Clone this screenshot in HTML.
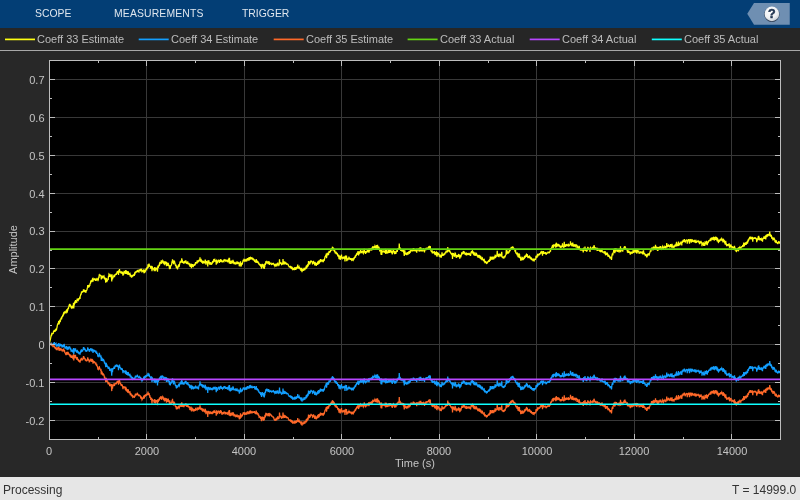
<!DOCTYPE html>
<html><head><meta charset="utf-8"><style>
*{-webkit-font-smoothing:antialiased;}
html,body{margin:0;padding:0;width:800px;height:500px;overflow:hidden;background:#282828;font-family:"Liberation Sans",sans-serif;}
.abs{position:absolute;white-space:nowrap;}
div{white-space:nowrap;will-change:transform;}
#top{position:absolute;left:0;top:0;width:800px;height:28px;background:#033e75;}
.tab{position:absolute;top:8px;color:#dfe6ee;font-size:10.4px;line-height:12px;}
#legend{position:absolute;left:0;top:28px;width:800px;height:22px;background:#262626;}
#sep{position:absolute;left:0;top:50px;width:800px;height:1px;background:#a8a8a8;}
.lg{position:absolute;top:33px;font-size:11px;line-height:13px;color:#bcbcbc;}
.ll{position:absolute;top:39px;height:2px;width:30px;}
.tl{position:absolute;font-size:11px;line-height:13px;color:#c4c4c4;}
.xl{top:445px;width:80px;text-align:center;}
.yl{left:0;width:44.5px;text-align:right;}
#status{position:absolute;left:0;top:477px;width:800px;height:23px;background:#e6e6e6;}
.st{position:absolute;top:483px;font-size:12px;line-height:14px;color:#333;}
</style></head><body>
<div id="top"></div>
<div class="tab" style="left:35px">SCOPE</div>
<div class="tab" style="left:114px;letter-spacing:0.15px">MEASUREMENTS</div>
<div class="tab" style="left:242px">TRIGGER</div>
<svg class="abs" style="left:740px;top:0" width="60" height="28">
<defs><radialGradient id="hg" cx="0.4" cy="0.3" r="0.8"><stop offset="0" stop-color="#ffffff"/><stop offset="0.6" stop-color="#eef0f3"/><stop offset="1" stop-color="#b9c2cc"/></radialGradient></defs>
<polygon points="7.25,13.75 14,2.9 49.75,2.9 49.75,24.75 14,24.75" fill="#6f8fb2"/>
<circle cx="31.9" cy="14.5" r="7.6" fill="#2a3a50"/>
<circle cx="31.9" cy="13.9" r="7.3" fill="url(#hg)"/>
<text x="31.9" y="18.4" text-anchor="middle" font-family="Liberation Sans" font-weight="bold" font-size="12.5" fill="#1f3350" stroke="#1f3350" stroke-width="0.5">?</text>
</svg>
<div id="legend"></div>
<div class="lg" style="left:37.3px">Coeff 33 Estimate</div>
<div class="lg" style="left:171.0px">Coeff 34 Estimate</div>
<div class="lg" style="left:306.0px">Coeff 35 Estimate</div>
<div class="lg" style="left:439.90000000000003px">Coeff 33 Actual</div>
<div class="lg" style="left:562.0px">Coeff 34 Actual</div>
<div class="lg" style="left:684.0999999999999px">Coeff 35 Actual</div>
<svg class="abs" style="left:0;top:0" width="800" height="50"><line x1="5" x2="35" y1="39.4" y2="39.4" stroke="#ffff11" stroke-width="1.7"/><line x1="138.7" x2="168.7" y1="39.4" y2="39.4" stroke="#139fff" stroke-width="1.7"/><line x1="273.7" x2="303.7" y1="39.4" y2="39.4" stroke="#ff6929" stroke-width="1.7"/><line x1="407.6" x2="437.6" y1="39.4" y2="39.4" stroke="#64d413" stroke-width="1.7"/><line x1="529.7" x2="559.7" y1="39.4" y2="39.4" stroke="#b746ff" stroke-width="1.7"/><line x1="651.8" x2="681.8" y1="39.4" y2="39.4" stroke="#0fffff" stroke-width="1.7"/></svg>
<div id="sep"></div>
<svg class="abs" style="left:0;top:0" width="800" height="500">
<defs><clipPath id="clip"><rect x="49" y="60" width="732" height="380"/></clipPath></defs>
<rect x="49" y="60" width="731" height="379" fill="#000"/>
<line x1="49.5" y1="60" x2="49.5" y2="439" stroke="#383838"/>
<line x1="146.5" y1="60" x2="146.5" y2="439" stroke="#383838"/>
<line x1="244.5" y1="60" x2="244.5" y2="439" stroke="#383838"/>
<line x1="341.5" y1="60" x2="341.5" y2="439" stroke="#383838"/>
<line x1="439.5" y1="60" x2="439.5" y2="439" stroke="#383838"/>
<line x1="536.5" y1="60" x2="536.5" y2="439" stroke="#383838"/>
<line x1="634.5" y1="60" x2="634.5" y2="439" stroke="#383838"/>
<line x1="731.5" y1="60" x2="731.5" y2="439" stroke="#383838"/>
<line x1="49" y1="420.5" x2="780" y2="420.5" stroke="#383838"/>
<line x1="49" y1="382.5" x2="780" y2="382.5" stroke="#383838"/>
<line x1="49" y1="344.5" x2="780" y2="344.5" stroke="#383838"/>
<line x1="49" y1="306.5" x2="780" y2="306.5" stroke="#383838"/>
<line x1="49" y1="268.5" x2="780" y2="268.5" stroke="#383838"/>
<line x1="49" y1="231.5" x2="780" y2="231.5" stroke="#383838"/>
<line x1="49" y1="193.5" x2="780" y2="193.5" stroke="#383838"/>
<line x1="49" y1="155.5" x2="780" y2="155.5" stroke="#383838"/>
<line x1="49" y1="117.5" x2="780" y2="117.5" stroke="#383838"/>
<line x1="49" y1="79.5" x2="780" y2="79.5" stroke="#383838"/>
<g clip-path="url(#clip)" fill="none" stroke-linejoin="miter" stroke-miterlimit="3">
<path d="M49.50 343.1 L49.75 342.0 L50.00 340.8 L50.25 339.7 L50.50 338.9 L50.75 337.6 L51.00 335.9 L51.25 335.9 L51.50 334.3 L51.75 333.8 L52.00 334.4 L52.25 333.8 L52.50 333.6 L52.75 333.3 L53.00 333.0 L53.25 333.2 L53.50 331.5 L53.75 331.4 L54.00 330.9 L54.25 330.3 L54.50 330.3 L54.75 331.1 L55.00 330.7 L55.25 331.7 L55.50 330.2 L55.75 329.4 L56.00 328.7 L56.25 330.0 L56.50 329.8 L56.75 328.1 L57.00 327.6 L57.25 325.7 L57.50 324.6 L57.75 324.5 L58.00 323.2 L58.25 324.3 L58.50 322.0 L58.75 321.0 L59.00 324.3 L59.25 323.3 L59.50 321.4 L59.75 321.6 L60.00 319.6 L60.25 321.9 L60.50 319.6 L60.75 320.1 L61.00 317.9 L61.25 318.3 L61.50 317.7 L61.75 318.1 L62.00 317.1 L62.25 316.6 L62.50 316.1 L62.75 316.2 L63.00 315.0 L63.25 315.1 L63.50 313.4 L63.75 312.5 L64.00 314.5 L64.25 312.3 L64.50 311.4 L64.75 312.3 L65.00 312.6 L65.25 311.5 L65.50 312.5 L65.75 312.3 L66.00 311.3 L66.25 311.4 L66.50 310.1 L66.75 309.9 L67.00 312.4 L67.25 312.1 L67.50 310.5 L67.75 310.4 L68.00 307.8 L68.25 308.6 L68.50 308.5 L68.75 306.7 L69.00 306.2 L69.25 304.7 L69.50 305.3 L69.75 303.8 L70.00 305.3 L70.25 306.6 L70.50 304.7 L70.75 305.3 L71.00 306.8 L71.25 308.1 L71.50 306.1 L71.75 308.0 L72.00 307.8 L72.25 308.0 L72.50 307.9 L72.75 305.6 L73.00 306.8 L73.25 306.1 L73.50 302.8 L73.75 308.4 L74.00 305.5 L74.25 304.6 L74.50 303.4 L74.75 301.9 L75.00 301.6 L75.25 303.4 L75.50 300.0 L75.75 302.8 L76.00 301.7 L76.25 301.5 L76.50 302.0 L76.75 302.1 L77.00 299.9 L77.25 298.5 L77.50 301.0 L77.75 299.6 L78.00 299.9 L78.25 300.2 L78.50 298.8 L78.75 298.8 L79.00 299.7 L79.25 298.2 L79.50 298.8 L79.75 296.9 L80.00 298.9 L80.25 296.0 L80.50 295.6 L80.75 294.4 L81.00 294.5 L81.25 293.9 L81.50 291.5 L81.75 292.6 L82.00 291.9 L82.25 291.4 L82.50 292.7 L82.75 291.2 L83.00 292.2 L83.25 290.8 L83.50 289.4 L83.75 291.1 L84.00 289.4 L84.25 291.0 L84.50 291.8 L84.75 291.0 L85.00 290.8 L85.25 292.0 L85.50 291.8 L85.75 292.1 L86.00 292.1 L86.25 290.0 L86.50 290.6 L86.75 290.3 L87.00 289.5 L87.25 288.3 L87.50 287.4 L87.75 285.0 L88.00 287.0 L88.25 287.1 L88.50 285.0 L88.75 286.3 L89.00 284.8 L89.25 287.2 L89.50 284.8 L89.75 286.0 L90.00 284.2 L90.25 282.9 L90.50 283.6 L90.75 281.3 L91.00 280.9 L91.25 281.3 L91.50 280.8 L91.75 282.2 L92.00 280.2 L92.25 279.9 L92.50 278.8 L92.75 278.5 L93.00 281.8 L93.25 279.2 L93.50 279.0 L93.75 279.1 L94.00 280.1 L94.25 279.4 L94.50 278.9 L94.75 279.0 L95.00 279.6 L95.25 279.4 L95.50 280.3 L95.75 280.3 L96.00 279.7 L96.25 280.0 L96.50 279.0 L96.75 278.4 L97.00 280.0 L97.25 278.8 L97.50 279.2 L97.75 280.1 L98.00 280.5 L98.25 280.1 L98.50 278.7 L98.75 277.6 L99.00 278.0 L99.25 274.2 L99.50 275.5 L99.75 276.1 L100.00 275.0 L100.25 275.5 L100.50 275.8 L100.75 275.9 L101.00 275.4 L101.25 279.4 L101.50 276.9 L101.75 277.2 L102.00 276.1 L102.25 276.2 L102.50 277.7 L102.75 278.3 L103.00 276.9 L103.25 275.5 L103.50 276.6 L103.75 276.8 L104.00 276.3 L104.25 277.4 L104.50 279.1 L104.75 277.3 L105.00 279.8 L105.25 278.9 L105.50 280.3 L105.75 282.6 L106.00 279.0 L106.25 278.0 L106.50 281.9 L106.75 280.7 L107.00 279.7 L107.25 280.7 L107.50 280.2 L107.75 279.7 L108.00 278.9 L108.25 279.0 L108.50 276.0 L108.75 276.6 L109.00 274.0 L109.25 274.3 L109.50 275.3 L109.75 277.0 L110.00 276.1 L110.25 276.0 L110.50 275.6 L110.75 275.0 L111.00 275.5 L111.25 276.9 L111.50 277.7 L111.75 281.4 L112.00 274.3 L112.25 277.3 L112.50 279.4 L112.75 276.8 L113.00 278.0 L113.25 276.9 L113.50 276.8 L113.75 276.4 L114.00 274.8 L114.25 276.3 L114.50 277.2 L114.75 275.1 L115.00 274.4 L115.25 275.3 L115.50 274.1 L115.75 274.9 L116.00 273.8 L116.25 273.6 L116.50 273.9 L116.75 273.1 L117.00 273.7 L117.25 271.4 L117.50 273.0 L117.75 271.8 L118.00 271.9 L118.25 270.9 L118.50 274.9 L118.75 270.4 L119.00 272.6 L119.25 271.1 L119.50 269.0 L119.75 271.1 L120.00 271.7 L120.25 272.6 L120.50 271.4 L120.75 272.5 L121.00 273.1 L121.25 273.2 L121.50 272.8 L121.75 271.4 L122.00 272.7 L122.25 271.8 L122.50 273.3 L122.75 273.9 L123.00 275.7 L123.25 272.4 L123.50 273.1 L123.75 273.5 L124.00 272.0 L124.25 272.3 L124.50 273.1 L124.75 270.9 L125.00 271.5 L125.25 273.3 L125.50 273.3 L125.75 270.1 L126.00 272.4 L126.25 270.6 L126.50 274.0 L126.75 273.0 L127.00 271.0 L127.25 272.4 L127.50 273.8 L127.75 274.6 L128.00 272.3 L128.25 271.3 L128.50 273.2 L128.75 273.4 L129.00 275.0 L129.25 274.1 L129.50 273.0 L129.75 274.0 L130.00 273.7 L130.25 276.7 L130.50 274.8 L130.75 275.0 L131.00 275.1 L131.25 276.2 L131.50 277.6 L131.75 275.6 L132.00 277.0 L132.25 275.9 L132.50 275.4 L132.75 276.6 L133.00 275.8 L133.25 274.9 L133.50 275.0 L133.75 275.8 L134.00 274.7 L134.25 276.0 L134.50 273.6 L134.75 273.9 L135.00 274.0 L135.25 272.4 L135.50 271.3 L135.75 272.9 L136.00 271.5 L136.25 272.1 L136.50 271.8 L136.75 271.4 L137.00 272.1 L137.25 270.0 L137.50 270.6 L137.75 271.3 L138.00 272.1 L138.25 271.0 L138.50 272.3 L138.75 271.0 L139.00 271.4 L139.25 269.7 L139.50 270.5 L139.75 269.5 L140.00 270.1 L140.25 269.6 L140.50 269.5 L140.75 271.4 L141.00 270.0 L141.25 271.4 L141.50 268.7 L141.75 270.7 L142.00 271.6 L142.25 271.1 L142.50 271.0 L142.75 270.8 L143.00 271.7 L143.25 270.8 L143.50 272.0 L143.75 269.3 L144.00 272.6 L144.25 272.5 L144.50 272.2 L144.75 269.9 L145.00 271.9 L145.25 271.6 L145.50 270.9 L145.75 270.2 L146.00 268.7 L146.25 270.2 L146.50 269.0 L146.75 269.3 L147.00 267.4 L147.25 268.2 L147.50 267.9 L147.75 267.4 L148.00 264.4 L148.25 267.6 L148.50 266.5 L148.75 266.2 L149.00 263.5 L149.25 264.9 L149.50 265.3 L149.75 266.5 L150.00 265.9 L150.25 267.2 L150.50 266.1 L150.75 268.7 L151.00 267.0 L151.25 267.9 L151.50 265.7 L151.75 268.3 L152.00 271.3 L152.25 266.6 L152.50 267.1 L152.75 267.8 L153.00 268.4 L153.25 269.0 L153.50 268.9 L153.75 268.9 L154.00 268.9 L154.25 271.1 L154.50 268.8 L154.75 267.0 L155.00 268.3 L155.25 269.5 L155.50 270.0 L155.75 269.2 L156.00 269.4 L156.25 267.7 L156.50 268.5 L156.75 268.3 L157.00 268.5 L157.25 267.7 L157.50 271.8 L157.75 267.1 L158.00 265.5 L158.25 268.0 L158.50 266.7 L158.75 266.2 L159.00 265.6 L159.25 264.6 L159.50 264.9 L159.75 263.3 L160.00 263.7 L160.25 262.8 L160.50 263.0 L160.75 262.7 L161.00 262.4 L161.25 260.4 L161.50 263.8 L161.75 262.3 L162.00 261.5 L162.25 261.4 L162.50 262.6 L162.75 260.7 L163.00 261.1 L163.25 261.2 L163.50 263.8 L163.75 262.4 L164.00 263.4 L164.25 264.1 L164.50 263.5 L164.75 261.2 L165.00 262.1 L165.25 263.4 L165.50 263.0 L165.75 261.6 L166.00 262.3 L166.25 263.9 L166.50 266.2 L166.75 264.0 L167.00 263.0 L167.25 263.4 L167.50 264.5 L167.75 265.3 L168.00 265.7 L168.25 262.7 L168.50 265.8 L168.75 264.7 L169.00 265.7 L169.25 266.9 L169.50 269.1 L169.75 265.2 L170.00 267.9 L170.25 269.0 L170.50 266.6 L170.75 265.4 L171.00 266.0 L171.25 265.1 L171.50 264.9 L171.75 263.5 L172.00 261.4 L172.25 263.0 L172.50 259.2 L172.75 262.1 L173.00 261.5 L173.25 262.0 L173.50 264.2 L173.75 262.8 L174.00 260.4 L174.25 262.1 L174.50 261.0 L174.75 262.9 L175.00 263.1 L175.25 264.9 L175.50 265.3 L175.75 265.6 L176.00 265.4 L176.25 267.3 L176.50 268.2 L176.75 265.7 L177.00 267.7 L177.25 267.6 L177.50 269.3 L177.75 267.8 L178.00 267.0 L178.25 266.5 L178.50 265.6 L178.75 266.1 L179.00 265.5 L179.25 265.9 L179.50 264.8 L179.75 263.5 L180.00 262.1 L180.25 261.5 L180.50 262.4 L180.75 262.1 L181.00 260.7 L181.25 262.6 L181.50 261.5 L181.75 258.4 L182.00 261.7 L182.25 259.9 L182.50 262.1 L182.75 262.9 L183.00 262.0 L183.25 261.3 L183.50 263.7 L183.75 262.5 L184.00 263.7 L184.25 262.0 L184.50 261.9 L184.75 261.0 L185.00 262.1 L185.25 262.4 L185.50 261.6 L185.75 260.5 L186.00 261.3 L186.25 261.9 L186.50 262.3 L186.75 264.0 L187.00 263.0 L187.25 263.0 L187.50 263.2 L187.75 261.3 L188.00 264.3 L188.25 263.4 L188.50 263.2 L188.75 263.3 L189.00 262.9 L189.25 265.1 L189.50 263.6 L189.75 265.7 L190.00 265.7 L190.25 266.8 L190.50 265.9 L190.75 266.2 L191.00 263.5 L191.25 266.2 L191.50 268.1 L191.75 265.6 L192.00 264.1 L192.25 265.0 L192.50 264.9 L192.75 264.1 L193.00 267.0 L193.25 265.2 L193.50 265.9 L193.75 265.3 L194.00 265.4 L194.25 265.4 L194.50 263.8 L194.75 264.6 L195.00 265.3 L195.25 264.2 L195.50 262.7 L195.75 262.7 L196.00 263.2 L196.25 262.7 L196.50 262.4 L196.75 262.6 L197.00 262.8 L197.25 261.0 L197.50 261.1 L197.75 261.6 L198.00 261.2 L198.25 261.6 L198.50 262.2 L198.75 260.6 L199.00 260.2 L199.25 260.2 L199.50 260.3 L199.75 260.5 L200.00 257.4 L200.25 260.5 L200.50 260.3 L200.75 261.0 L201.00 260.7 L201.25 260.0 L201.50 260.7 L201.75 262.1 L202.00 262.6 L202.25 261.4 L202.50 260.5 L202.75 263.8 L203.00 262.6 L203.25 261.4 L203.50 260.9 L203.75 262.5 L204.00 261.5 L204.25 263.2 L204.50 261.9 L204.75 263.5 L205.00 261.6 L205.25 259.6 L205.50 261.5 L205.75 262.4 L206.00 264.6 L206.25 261.0 L206.50 261.9 L206.75 262.2 L207.00 261.5 L207.25 262.3 L207.50 261.2 L207.75 266.4 L208.00 260.2 L208.25 261.7 L208.50 261.3 L208.75 261.7 L209.00 261.4 L209.25 263.3 L209.50 263.2 L209.75 264.7 L210.00 263.0 L210.25 262.1 L210.50 263.3 L210.75 264.5 L211.00 263.1 L211.25 264.9 L211.50 263.9 L211.75 264.5 L212.00 262.1 L212.25 263.7 L212.50 261.7 L212.75 261.0 L213.00 262.2 L213.25 261.6 L213.50 261.8 L213.75 259.0 L214.00 259.7 L214.25 260.3 L214.50 259.7 L214.75 259.5 L215.00 261.5 L215.25 260.7 L215.50 261.0 L215.75 260.5 L216.00 261.7 L216.25 264.7 L216.50 260.1 L216.75 260.1 L217.00 260.8 L217.25 262.0 L217.50 263.5 L217.75 261.1 L218.00 261.6 L218.25 261.1 L218.50 260.4 L218.75 260.2 L219.00 260.5 L219.25 259.9 L219.50 263.0 L219.75 261.4 L220.00 260.0 L220.25 261.8 L220.50 260.5 L220.75 259.0 L221.00 261.9 L221.25 259.8 L221.50 260.9 L221.75 262.2 L222.00 261.7 L222.25 260.9 L222.50 262.2 L222.75 261.7 L223.00 260.3 L223.25 260.9 L223.50 261.1 L223.75 261.4 L224.00 259.4 L224.25 260.1 L224.50 261.1 L224.75 260.3 L225.00 259.8 L225.25 260.0 L225.50 261.7 L225.75 260.1 L226.00 260.1 L226.25 260.8 L226.50 260.7 L226.75 260.5 L227.00 261.5 L227.25 260.2 L227.50 262.3 L227.75 260.4 L228.00 260.1 L228.25 260.5 L228.50 261.0 L228.75 260.4 L229.00 257.9 L229.25 263.4 L229.50 257.8 L229.75 262.7 L230.00 260.5 L230.25 264.0 L230.50 262.1 L230.75 261.8 L231.00 261.1 L231.25 263.6 L231.50 260.6 L231.75 261.9 L232.00 261.2 L232.25 262.8 L232.50 262.7 L232.75 261.5 L233.00 259.9 L233.25 262.3 L233.50 262.1 L233.75 263.2 L234.00 264.2 L234.25 263.3 L234.50 264.2 L234.75 263.1 L235.00 263.6 L235.25 263.0 L235.50 263.5 L235.75 263.8 L236.00 263.0 L236.25 262.9 L236.50 263.4 L236.75 264.0 L237.00 261.3 L237.25 264.1 L237.50 262.9 L237.75 263.7 L238.00 261.8 L238.25 263.8 L238.50 263.3 L238.75 263.6 L239.00 262.2 L239.25 266.2 L239.50 265.8 L239.75 264.7 L240.00 264.6 L240.25 265.1 L240.50 261.3 L240.75 265.1 L241.00 266.1 L241.25 265.9 L241.50 264.1 L241.75 264.1 L242.00 263.0 L242.25 264.6 L242.50 263.0 L242.75 261.8 L243.00 261.1 L243.25 259.8 L243.50 261.3 L243.75 260.6 L244.00 259.3 L244.25 259.4 L244.50 261.6 L244.75 259.6 L245.00 261.4 L245.25 259.5 L245.50 260.4 L245.75 259.9 L246.00 260.3 L246.25 259.0 L246.50 259.8 L246.75 261.5 L247.00 259.1 L247.25 259.1 L247.50 258.1 L247.75 258.9 L248.00 258.3 L248.25 260.8 L248.50 258.5 L248.75 258.8 L249.00 260.5 L249.25 259.7 L249.50 257.1 L249.75 257.8 L250.00 258.8 L250.25 259.0 L250.50 258.4 L250.75 257.3 L251.00 257.5 L251.25 258.4 L251.50 259.4 L251.75 258.4 L252.00 258.0 L252.25 258.6 L252.50 259.0 L252.75 257.9 L253.00 259.2 L253.25 258.7 L253.50 260.3 L253.75 259.0 L254.00 260.1 L254.25 260.6 L254.50 259.5 L254.75 261.4 L255.00 260.9 L255.25 261.1 L255.50 262.1 L255.75 262.1 L256.00 260.8 L256.25 259.0 L256.50 262.6 L256.75 261.2 L257.00 262.8 L257.25 262.0 L257.50 261.5 L257.75 262.0 L258.00 261.3 L258.25 262.7 L258.50 263.9 L258.75 262.6 L259.00 264.6 L259.25 264.1 L259.50 264.5 L259.75 263.8 L260.00 265.5 L260.25 264.0 L260.50 265.8 L260.75 266.7 L261.00 265.6 L261.25 265.3 L261.50 268.6 L261.75 264.5 L262.00 265.8 L262.25 263.8 L262.50 264.8 L262.75 265.5 L263.00 266.5 L263.25 267.2 L263.50 266.9 L263.75 264.4 L264.00 268.2 L264.25 268.9 L264.50 265.7 L264.75 267.1 L265.00 263.4 L265.25 264.1 L265.50 264.2 L265.75 262.1 L266.00 262.3 L266.25 261.8 L266.50 261.9 L266.75 262.4 L267.00 261.5 L267.25 261.8 L267.50 261.9 L267.75 262.5 L268.00 263.6 L268.25 263.6 L268.50 261.8 L268.75 261.7 L269.00 262.4 L269.25 263.2 L269.50 264.8 L269.75 262.9 L270.00 263.3 L270.25 263.1 L270.50 263.6 L270.75 263.6 L271.00 263.8 L271.25 263.9 L271.50 264.3 L271.75 264.9 L272.00 263.6 L272.25 264.0 L272.50 264.1 L272.75 263.8 L273.00 263.6 L273.25 263.8 L273.50 263.5 L273.75 263.8 L274.00 264.8 L274.25 265.2 L274.50 264.9 L274.75 264.7 L275.00 266.1 L275.25 265.7 L275.50 264.9 L275.75 264.6 L276.00 266.4 L276.25 265.3 L276.50 263.6 L276.75 266.4 L277.00 264.2 L277.25 265.1 L277.50 264.8 L277.75 262.6 L278.00 264.2 L278.25 264.6 L278.50 265.7 L278.75 264.2 L279.00 265.0 L279.25 264.5 L279.50 259.3 L279.75 262.8 L280.00 262.8 L280.25 262.7 L280.50 263.2 L280.75 263.8 L281.00 262.3 L281.25 263.7 L281.50 264.7 L281.75 264.6 L282.00 263.5 L282.25 264.6 L282.50 263.5 L282.75 263.2 L283.00 259.0 L283.25 262.5 L283.50 263.3 L283.75 264.0 L284.00 263.8 L284.25 261.3 L284.50 264.2 L284.75 263.5 L285.00 263.1 L285.25 264.0 L285.50 262.7 L285.75 263.0 L286.00 263.5 L286.25 263.3 L286.50 264.7 L286.75 263.3 L287.00 264.2 L287.25 264.1 L287.50 264.2 L287.75 264.1 L288.00 264.5 L288.25 264.8 L288.50 266.2 L288.75 265.5 L289.00 266.9 L289.25 267.0 L289.50 266.2 L289.75 267.5 L290.00 267.0 L290.25 267.2 L290.50 266.8 L290.75 267.8 L291.00 268.0 L291.25 266.5 L291.50 268.1 L291.75 269.2 L292.00 267.2 L292.25 267.5 L292.50 268.5 L292.75 269.6 L293.00 269.5 L293.25 268.9 L293.50 268.0 L293.75 268.6 L294.00 268.4 L294.25 270.2 L294.50 269.3 L294.75 267.9 L295.00 267.1 L295.25 269.0 L295.50 269.8 L295.75 267.9 L296.00 267.4 L296.25 269.2 L296.50 268.5 L296.75 266.9 L297.00 267.9 L297.25 266.7 L297.50 268.1 L297.75 264.6 L298.00 268.6 L298.25 267.4 L298.50 268.7 L298.75 267.1 L299.00 266.7 L299.25 268.6 L299.50 267.6 L299.75 268.2 L300.00 269.3 L300.25 268.0 L300.50 268.8 L300.75 269.6 L301.00 271.0 L301.25 270.5 L301.50 270.8 L301.75 267.8 L302.00 272.1 L302.25 269.6 L302.50 269.1 L302.75 270.7 L303.00 269.3 L303.25 271.0 L303.50 269.7 L303.75 269.3 L304.00 267.9 L304.25 269.1 L304.50 269.4 L304.75 269.9 L305.00 269.7 L305.25 267.7 L305.50 268.8 L305.75 268.2 L306.00 267.2 L306.25 267.6 L306.50 265.6 L306.75 268.3 L307.00 265.4 L307.25 265.1 L307.50 266.3 L307.75 264.7 L308.00 265.9 L308.25 265.5 L308.50 261.0 L308.75 264.1 L309.00 261.4 L309.25 263.8 L309.50 263.4 L309.75 264.5 L310.00 262.2 L310.25 262.3 L310.50 262.5 L310.75 261.8 L311.00 260.3 L311.25 261.5 L311.50 261.6 L311.75 261.7 L312.00 261.7 L312.25 261.2 L312.50 263.7 L312.75 263.5 L313.00 261.7 L313.25 262.9 L313.50 260.9 L313.75 261.9 L314.00 263.2 L314.25 263.6 L314.50 262.7 L314.75 265.4 L315.00 262.0 L315.25 262.6 L315.50 264.2 L315.75 265.2 L316.00 263.8 L316.25 266.0 L316.50 264.1 L316.75 264.4 L317.00 264.4 L317.25 263.3 L317.50 262.4 L317.75 262.9 L318.00 264.0 L318.25 263.8 L318.50 262.7 L318.75 260.5 L319.00 262.8 L319.25 263.0 L319.50 261.8 L319.75 261.0 L320.00 261.3 L320.25 260.5 L320.50 259.1 L320.75 262.3 L321.00 260.1 L321.25 260.7 L321.50 260.6 L321.75 260.1 L322.00 260.3 L322.25 261.2 L322.50 261.1 L322.75 260.4 L323.00 260.6 L323.25 262.3 L323.50 260.0 L323.75 259.8 L324.00 260.2 L324.25 260.3 L324.50 259.0 L324.75 258.1 L325.00 256.7 L325.25 256.4 L325.50 256.4 L325.75 255.8 L326.00 255.9 L326.25 253.5 L326.50 258.1 L326.75 256.7 L327.00 254.2 L327.25 252.9 L327.50 254.8 L327.75 254.5 L328.00 253.2 L328.25 252.8 L328.50 255.2 L328.75 253.2 L329.00 251.6 L329.25 251.7 L329.50 252.9 L329.75 250.8 L330.00 252.3 L330.25 251.8 L330.50 251.3 L330.75 249.3 L331.00 249.8 L331.25 249.3 L331.50 248.1 L331.75 250.6 L332.00 249.9 L332.25 248.3 L332.50 246.7 L332.75 250.1 L333.00 247.3 L333.25 248.9 L333.50 247.9 L333.75 249.5 L334.00 250.8 L334.25 248.9 L334.50 252.1 L334.75 250.3 L335.00 251.9 L335.25 252.8 L335.50 252.3 L335.75 251.9 L336.00 252.0 L336.25 252.3 L336.50 253.6 L336.75 253.4 L337.00 253.4 L337.25 253.4 L337.50 254.2 L337.75 255.7 L338.00 256.0 L338.25 254.6 L338.50 255.8 L338.75 254.9 L339.00 259.3 L339.25 256.3 L339.50 255.5 L339.75 258.6 L340.00 255.9 L340.25 259.9 L340.50 256.8 L340.75 256.5 L341.00 256.6 L341.25 256.9 L341.50 254.6 L341.75 258.3 L342.00 258.6 L342.25 256.9 L342.50 257.7 L342.75 257.8 L343.00 257.6 L343.25 258.3 L343.50 258.2 L343.75 257.5 L344.00 257.7 L344.25 257.0 L344.50 257.4 L344.75 258.5 L345.00 261.5 L345.25 257.2 L345.50 256.7 L345.75 257.8 L346.00 257.4 L346.25 257.6 L346.50 255.5 L346.75 261.2 L347.00 260.0 L347.25 258.6 L347.50 259.1 L347.75 258.4 L348.00 260.2 L348.25 258.2 L348.50 258.2 L348.75 258.4 L349.00 257.6 L349.25 258.2 L349.50 257.7 L349.75 259.4 L350.00 258.0 L350.25 259.8 L350.50 259.1 L350.75 258.5 L351.00 258.5 L351.25 259.7 L351.50 260.0 L351.75 258.4 L352.00 259.5 L352.25 260.7 L352.50 258.2 L352.75 258.7 L353.00 259.3 L353.25 260.2 L353.50 259.8 L353.75 258.8 L354.00 259.3 L354.25 257.2 L354.50 257.8 L354.75 257.1 L355.00 256.9 L355.25 255.7 L355.50 257.6 L355.75 255.3 L356.00 255.1 L356.25 255.8 L356.50 253.9 L356.75 253.6 L357.00 254.6 L357.25 253.7 L357.50 254.1 L357.75 254.3 L358.00 251.1 L358.25 253.9 L358.50 254.8 L358.75 254.7 L359.00 253.1 L359.25 253.2 L359.50 251.3 L359.75 253.5 L360.00 252.7 L360.25 251.8 L360.50 250.7 L360.75 251.1 L361.00 250.5 L361.25 251.8 L361.50 253.1 L361.75 251.7 L362.00 251.3 L362.25 251.2 L362.50 251.8 L362.75 250.6 L363.00 252.9 L363.25 253.4 L363.50 252.5 L363.75 250.9 L364.00 252.1 L364.25 248.7 L364.50 251.9 L364.75 252.3 L365.00 251.4 L365.25 251.5 L365.50 253.9 L365.75 252.1 L366.00 253.2 L366.25 251.7 L366.50 251.7 L366.75 252.1 L367.00 252.1 L367.25 250.0 L367.50 251.9 L367.75 250.7 L368.00 250.9 L368.25 251.3 L368.50 249.5 L368.75 249.3 L369.00 252.7 L369.25 251.1 L369.50 249.4 L369.75 249.4 L370.00 249.8 L370.25 249.1 L370.50 248.9 L370.75 248.9 L371.00 249.1 L371.25 250.5 L371.50 249.6 L371.75 248.4 L372.00 248.6 L372.25 250.2 L372.50 247.9 L372.75 246.8 L373.00 246.1 L373.25 247.8 L373.50 248.1 L373.75 248.1 L374.00 246.8 L374.25 247.9 L374.50 246.8 L374.75 246.9 L375.00 245.8 L375.25 246.3 L375.50 247.5 L375.75 248.5 L376.00 245.9 L376.25 247.5 L376.50 246.6 L376.75 245.1 L377.00 248.2 L377.25 249.3 L377.50 244.8 L377.75 247.5 L378.00 246.7 L378.25 247.3 L378.50 248.3 L378.75 246.5 L379.00 249.7 L379.25 247.5 L379.50 249.8 L379.75 250.7 L380.00 250.4 L380.25 249.8 L380.50 249.7 L380.75 249.6 L381.00 254.6 L381.25 251.0 L381.50 249.0 L381.75 255.0 L382.00 251.3 L382.25 251.1 L382.50 251.1 L382.75 251.7 L383.00 251.5 L383.25 251.2 L383.50 250.6 L383.75 251.6 L384.00 251.4 L384.25 251.6 L384.50 251.9 L384.75 250.9 L385.00 252.9 L385.25 250.0 L385.50 250.2 L385.75 253.9 L386.00 253.1 L386.25 249.8 L386.50 250.0 L386.75 253.4 L387.00 252.6 L387.25 252.5 L387.50 251.6 L387.75 252.8 L388.00 252.7 L388.25 250.1 L388.50 250.5 L388.75 252.4 L389.00 251.6 L389.25 253.0 L389.50 249.5 L389.75 252.6 L390.00 249.7 L390.25 252.2 L390.50 249.5 L390.75 252.4 L391.00 251.5 L391.25 252.1 L391.50 251.6 L391.75 252.2 L392.00 250.8 L392.25 254.4 L392.50 252.7 L392.75 253.3 L393.00 251.9 L393.25 250.3 L393.50 250.1 L393.75 252.2 L394.00 251.3 L394.25 251.6 L394.50 252.7 L394.75 254.1 L395.00 252.7 L395.25 252.0 L395.50 252.4 L395.75 252.3 L396.00 253.8 L396.25 251.6 L396.50 251.5 L396.75 251.1 L397.00 249.3 L397.25 251.8 L397.50 249.9 L397.75 249.3 L398.00 248.9 L398.25 248.4 L398.50 249.8 L398.75 248.1 L399.00 249.9 L399.25 243.6 L399.50 248.4 L399.75 248.9 L400.00 247.4 L400.25 249.1 L400.50 249.0 L400.75 251.0 L401.00 248.9 L401.25 249.8 L401.50 250.5 L401.75 250.0 L402.00 249.9 L402.25 250.3 L402.50 249.4 L402.75 250.4 L403.00 252.0 L403.25 250.3 L403.50 249.5 L403.75 253.1 L404.00 251.8 L404.25 255.9 L404.50 252.5 L404.75 250.4 L405.00 252.0 L405.25 254.5 L405.50 253.7 L405.75 253.5 L406.00 253.8 L406.25 254.1 L406.50 253.7 L406.75 255.1 L407.00 254.4 L407.25 252.0 L407.50 254.2 L407.75 253.2 L408.00 254.5 L408.25 253.6 L408.50 252.7 L408.75 251.8 L409.00 251.6 L409.25 253.0 L409.50 253.2 L409.75 252.2 L410.00 251.8 L410.25 252.0 L410.50 250.7 L410.75 250.4 L411.00 249.7 L411.25 249.1 L411.50 251.3 L411.75 249.9 L412.00 249.9 L412.25 251.0 L412.50 249.9 L412.75 251.5 L413.00 249.8 L413.25 250.2 L413.50 248.0 L413.75 250.9 L414.00 249.9 L414.25 250.6 L414.50 250.3 L414.75 249.7 L415.00 250.1 L415.25 250.8 L415.50 249.7 L415.75 251.3 L416.00 250.0 L416.25 249.2 L416.50 251.5 L416.75 252.7 L417.00 248.6 L417.25 250.3 L417.50 250.1 L417.75 249.5 L418.00 250.6 L418.25 249.0 L418.50 250.2 L418.75 249.7 L419.00 248.2 L419.25 251.1 L419.50 251.0 L419.75 250.8 L420.00 247.4 L420.25 251.3 L420.50 249.8 L420.75 247.4 L421.00 250.0 L421.25 250.4 L421.50 250.4 L421.75 248.6 L422.00 251.6 L422.25 250.8 L422.50 250.0 L422.75 248.8 L423.00 249.7 L423.25 248.9 L423.50 248.8 L423.75 250.4 L424.00 250.1 L424.25 249.3 L424.50 252.4 L424.75 249.7 L425.00 249.3 L425.25 250.2 L425.50 248.6 L425.75 249.3 L426.00 250.3 L426.25 247.8 L426.50 249.0 L426.75 249.0 L427.00 247.6 L427.25 248.7 L427.50 248.5 L427.75 247.6 L428.00 248.7 L428.25 248.1 L428.50 247.0 L428.75 247.2 L429.00 247.0 L429.25 248.6 L429.50 245.7 L429.75 248.7 L430.00 249.5 L430.25 246.1 L430.50 249.3 L430.75 249.9 L431.00 250.6 L431.25 251.3 L431.50 251.5 L431.75 250.6 L432.00 251.8 L432.25 251.4 L432.50 252.8 L432.75 252.7 L433.00 252.4 L433.25 251.7 L433.50 253.1 L433.75 252.5 L434.00 252.9 L434.25 251.0 L434.50 252.7 L434.75 252.2 L435.00 253.4 L435.25 255.1 L435.50 253.8 L435.75 253.0 L436.00 252.3 L436.25 252.0 L436.50 253.5 L436.75 256.0 L437.00 256.1 L437.25 252.2 L437.50 253.5 L437.75 254.7 L438.00 254.4 L438.25 254.1 L438.50 253.5 L438.75 253.9 L439.00 254.5 L439.25 256.8 L439.50 255.3 L439.75 255.1 L440.00 254.2 L440.25 257.4 L440.50 255.3 L440.75 256.8 L441.00 256.8 L441.25 257.7 L441.50 255.7 L441.75 255.7 L442.00 252.3 L442.25 254.9 L442.50 253.8 L442.75 255.9 L443.00 254.8 L443.25 253.8 L443.50 255.7 L443.75 254.3 L444.00 254.0 L444.25 254.3 L444.50 253.5 L444.75 254.6 L445.00 253.0 L445.25 252.8 L445.50 252.4 L445.75 253.4 L446.00 251.8 L446.25 250.6 L446.50 251.6 L446.75 251.2 L447.00 251.1 L447.25 251.9 L447.50 251.9 L447.75 247.1 L448.00 250.4 L448.25 250.5 L448.50 250.1 L448.75 250.9 L449.00 251.2 L449.25 249.2 L449.50 251.5 L449.75 251.6 L450.00 251.4 L450.25 252.1 L450.50 252.3 L450.75 253.0 L451.00 254.1 L451.25 253.1 L451.50 253.8 L451.75 254.6 L452.00 254.6 L452.25 252.9 L452.50 258.9 L452.75 253.8 L453.00 253.5 L453.25 253.5 L453.50 254.2 L453.75 253.9 L454.00 255.6 L454.25 256.5 L454.50 255.7 L454.75 256.0 L455.00 254.8 L455.25 253.3 L455.50 253.6 L455.75 255.9 L456.00 254.7 L456.25 257.7 L456.50 257.3 L456.75 257.2 L457.00 256.0 L457.25 255.1 L457.50 255.8 L457.75 256.8 L458.00 255.6 L458.25 255.0 L458.50 255.1 L458.75 254.0 L459.00 257.2 L459.25 256.8 L459.50 254.7 L459.75 258.1 L460.00 258.0 L460.25 255.4 L460.50 255.5 L460.75 255.8 L461.00 256.2 L461.25 255.3 L461.50 254.1 L461.75 253.1 L462.00 252.2 L462.25 254.4 L462.50 253.4 L462.75 253.3 L463.00 254.2 L463.25 251.1 L463.50 253.8 L463.75 251.7 L464.00 251.8 L464.25 252.8 L464.50 251.9 L464.75 252.7 L465.00 254.8 L465.25 253.3 L465.50 254.5 L465.75 254.7 L466.00 252.9 L466.25 253.7 L466.50 253.4 L466.75 255.3 L467.00 254.0 L467.25 253.6 L467.50 253.7 L467.75 253.6 L468.00 254.3 L468.25 254.2 L468.50 254.2 L468.75 254.4 L469.00 253.3 L469.25 253.3 L469.50 254.0 L469.75 255.0 L470.00 253.6 L470.25 254.1 L470.50 256.0 L470.75 254.4 L471.00 252.4 L471.25 251.9 L471.50 252.4 L471.75 251.9 L472.00 253.2 L472.25 251.2 L472.50 250.9 L472.75 252.7 L473.00 253.4 L473.25 253.8 L473.50 251.5 L473.75 255.0 L474.00 252.7 L474.25 255.6 L474.50 253.4 L474.75 254.0 L475.00 252.3 L475.25 255.7 L475.50 255.1 L475.75 253.8 L476.00 254.6 L476.25 253.9 L476.50 253.6 L476.75 255.1 L477.00 254.9 L477.25 256.1 L477.50 255.1 L477.75 256.8 L478.00 257.4 L478.25 256.3 L478.50 256.7 L478.75 256.0 L479.00 255.0 L479.25 256.1 L479.50 256.9 L479.75 256.5 L480.00 258.3 L480.25 257.0 L480.50 255.7 L480.75 258.9 L481.00 256.5 L481.25 259.0 L481.50 259.0 L481.75 257.7 L482.00 259.1 L482.25 258.7 L482.50 258.3 L482.75 260.1 L483.00 258.9 L483.25 259.6 L483.50 261.1 L483.75 259.2 L484.00 260.0 L484.25 259.7 L484.50 262.4 L484.75 260.6 L485.00 262.1 L485.25 261.7 L485.50 261.7 L485.75 262.0 L486.00 263.1 L486.25 262.4 L486.50 263.9 L486.75 263.4 L487.00 261.5 L487.25 263.3 L487.50 262.0 L487.75 261.9 L488.00 261.6 L488.25 261.7 L488.50 261.3 L488.75 260.8 L489.00 261.0 L489.25 261.9 L489.50 259.8 L489.75 259.9 L490.00 260.9 L490.25 256.6 L490.50 258.8 L490.75 259.5 L491.00 259.2 L491.25 258.1 L491.50 258.6 L491.75 258.7 L492.00 259.6 L492.25 256.6 L492.50 259.5 L492.75 258.9 L493.00 257.7 L493.25 256.9 L493.50 258.3 L493.75 258.7 L494.00 257.6 L494.25 256.5 L494.50 257.3 L494.75 256.7 L495.00 256.4 L495.25 254.7 L495.50 258.1 L495.75 256.1 L496.00 256.7 L496.25 256.6 L496.50 255.9 L496.75 255.7 L497.00 254.3 L497.25 250.9 L497.50 255.7 L497.75 255.9 L498.00 254.6 L498.25 257.0 L498.50 255.0 L498.75 255.3 L499.00 257.1 L499.25 253.5 L499.50 254.9 L499.75 255.6 L500.00 255.5 L500.25 254.9 L500.50 253.8 L500.75 255.4 L501.00 256.5 L501.25 255.4 L501.50 253.4 L501.75 251.9 L502.00 255.9 L502.25 257.7 L502.50 257.0 L502.75 257.1 L503.00 257.6 L503.25 257.3 L503.50 256.7 L503.75 257.9 L504.00 258.5 L504.25 256.1 L504.50 256.9 L504.75 255.9 L505.00 257.4 L505.25 255.6 L505.50 255.1 L505.75 254.8 L506.00 254.3 L506.25 250.1 L506.50 254.2 L506.75 253.7 L507.00 250.3 L507.25 253.1 L507.50 253.1 L507.75 252.5 L508.00 252.3 L508.25 252.4 L508.50 253.5 L508.75 251.3 L509.00 252.2 L509.25 252.1 L509.50 248.7 L509.75 250.6 L510.00 250.7 L510.25 250.3 L510.50 248.9 L510.75 249.3 L511.00 249.1 L511.25 248.0 L511.50 248.4 L511.75 247.7 L512.00 246.8 L512.25 248.2 L512.50 247.9 L512.75 246.4 L513.00 248.4 L513.25 247.8 L513.50 247.8 L513.75 250.0 L514.00 248.4 L514.25 249.8 L514.50 248.7 L514.75 249.5 L515.00 251.6 L515.25 251.1 L515.50 249.2 L515.75 253.3 L516.00 252.4 L516.25 254.0 L516.50 253.1 L516.75 253.2 L517.00 254.8 L517.25 255.3 L517.50 253.6 L517.75 254.0 L518.00 257.2 L518.25 253.5 L518.50 256.8 L518.75 255.7 L519.00 257.7 L519.25 254.0 L519.50 254.1 L519.75 258.1 L520.00 257.5 L520.25 257.6 L520.50 257.5 L520.75 260.7 L521.00 257.8 L521.25 258.4 L521.50 258.3 L521.75 258.7 L522.00 260.3 L522.25 257.6 L522.50 257.9 L522.75 257.9 L523.00 260.1 L523.25 257.8 L523.50 259.7 L523.75 257.9 L524.00 258.7 L524.25 257.5 L524.50 257.9 L524.75 257.2 L525.00 256.0 L525.25 255.9 L525.50 256.8 L525.75 256.4 L526.00 255.9 L526.25 254.6 L526.50 254.2 L526.75 254.7 L527.00 256.9 L527.25 254.2 L527.50 255.8 L527.75 257.0 L528.00 258.1 L528.25 256.3 L528.50 256.4 L528.75 257.4 L529.00 257.5 L529.25 257.6 L529.50 256.2 L529.75 256.4 L530.00 258.1 L530.25 256.8 L530.50 259.2 L530.75 258.7 L531.00 258.5 L531.25 259.1 L531.50 258.6 L531.75 259.7 L532.00 258.5 L532.25 260.2 L532.50 259.4 L532.75 258.7 L533.00 261.1 L533.25 258.5 L533.50 260.3 L533.75 260.1 L534.00 260.5 L534.25 258.7 L534.50 260.1 L534.75 259.8 L535.00 258.8 L535.25 259.4 L535.50 259.4 L535.75 258.8 L536.00 255.7 L536.25 257.5 L536.50 257.4 L536.75 256.7 L537.00 256.2 L537.25 256.5 L537.50 254.7 L537.75 255.0 L538.00 255.3 L538.25 254.0 L538.50 255.3 L538.75 254.5 L539.00 254.8 L539.25 254.5 L539.50 253.9 L539.75 253.2 L540.00 254.1 L540.25 253.8 L540.50 253.0 L540.75 252.1 L541.00 251.9 L541.25 251.7 L541.50 252.7 L541.75 252.4 L542.00 252.2 L542.25 252.0 L542.50 255.8 L542.75 251.8 L543.00 252.4 L543.25 252.4 L543.50 251.0 L543.75 253.3 L544.00 253.3 L544.25 252.3 L544.50 253.2 L544.75 253.2 L545.00 252.9 L545.25 253.4 L545.50 253.4 L545.75 252.2 L546.00 254.0 L546.25 254.7 L546.50 253.3 L546.75 253.5 L547.00 253.2 L547.25 253.0 L547.50 253.0 L547.75 252.8 L548.00 251.6 L548.25 252.9 L548.50 252.4 L548.75 252.7 L549.00 252.8 L549.25 252.8 L549.50 252.4 L549.75 251.9 L550.00 250.6 L550.25 251.2 L550.50 251.8 L550.75 248.0 L551.00 248.9 L551.25 248.7 L551.50 248.7 L551.75 247.5 L552.00 247.5 L552.25 245.6 L552.50 246.6 L552.75 244.9 L553.00 246.1 L553.25 247.2 L553.50 247.7 L553.75 244.4 L554.00 246.6 L554.25 244.9 L554.50 245.5 L554.75 246.1 L555.00 245.2 L555.25 244.9 L555.50 243.8 L555.75 247.7 L556.00 245.2 L556.25 242.7 L556.50 243.8 L556.75 246.9 L557.00 246.0 L557.25 244.8 L557.50 245.1 L557.75 244.3 L558.00 244.4 L558.25 245.4 L558.50 245.8 L558.75 245.3 L559.00 244.7 L559.25 245.0 L559.50 245.4 L559.75 247.0 L560.00 245.5 L560.25 247.8 L560.50 246.5 L560.75 245.6 L561.00 246.3 L561.25 247.8 L561.50 245.5 L561.75 246.0 L562.00 246.7 L562.25 246.5 L562.50 243.2 L562.75 245.4 L563.00 246.5 L563.25 246.5 L563.50 247.1 L563.75 246.8 L564.00 247.6 L564.25 241.8 L564.50 246.7 L564.75 246.0 L565.00 245.6 L565.25 246.8 L565.50 246.2 L565.75 245.9 L566.00 244.7 L566.25 244.6 L566.50 245.4 L566.75 244.6 L567.00 246.5 L567.25 244.9 L567.50 245.0 L567.75 244.5 L568.00 245.8 L568.25 243.7 L568.50 245.7 L568.75 246.5 L569.00 245.2 L569.25 245.5 L569.50 245.5 L569.75 245.5 L570.00 244.6 L570.25 244.5 L570.50 241.3 L570.75 244.6 L571.00 244.0 L571.25 243.8 L571.50 245.0 L571.75 245.5 L572.00 245.1 L572.25 245.4 L572.50 244.4 L572.75 242.7 L573.00 244.4 L573.25 246.3 L573.50 245.3 L573.75 245.2 L574.00 246.8 L574.25 244.4 L574.50 246.0 L574.75 246.0 L575.00 245.1 L575.25 244.3 L575.50 246.2 L575.75 245.8 L576.00 245.1 L576.25 244.9 L576.50 245.5 L576.75 244.7 L577.00 248.5 L577.25 246.1 L577.50 246.1 L577.75 246.2 L578.00 248.0 L578.25 248.3 L578.50 248.4 L578.75 248.6 L579.00 249.2 L579.25 245.9 L579.50 249.8 L579.75 249.3 L580.00 249.4 L580.25 250.4 L580.50 249.8 L580.75 249.2 L581.00 249.6 L581.25 249.9 L581.50 249.8 L581.75 249.1 L582.00 250.6 L582.25 248.6 L582.50 250.3 L582.75 248.5 L583.00 250.7 L583.25 252.5 L583.50 249.2 L583.75 247.7 L584.00 249.8 L584.25 248.3 L584.50 250.0 L584.75 250.0 L585.00 246.6 L585.25 249.2 L585.50 250.8 L585.75 248.4 L586.00 249.2 L586.25 250.3 L586.50 249.9 L586.75 251.6 L587.00 250.7 L587.25 248.6 L587.50 250.4 L587.75 246.9 L588.00 249.7 L588.25 248.7 L588.50 249.6 L588.75 248.9 L589.00 249.6 L589.25 248.4 L589.50 249.5 L589.75 248.7 L590.00 251.9 L590.25 247.7 L590.50 247.4 L590.75 249.1 L591.00 248.5 L591.25 248.9 L591.50 248.7 L591.75 248.3 L592.00 248.1 L592.25 248.3 L592.50 247.9 L592.75 249.1 L593.00 249.0 L593.25 247.3 L593.50 248.7 L593.75 246.6 L594.00 245.3 L594.25 245.9 L594.50 247.7 L594.75 248.0 L595.00 248.4 L595.25 249.3 L595.50 249.1 L595.75 247.4 L596.00 248.3 L596.25 248.5 L596.50 249.0 L596.75 249.5 L597.00 250.2 L597.25 250.0 L597.50 247.7 L597.75 250.8 L598.00 249.1 L598.25 249.2 L598.50 250.7 L598.75 249.6 L599.00 249.8 L599.25 249.8 L599.50 248.8 L599.75 251.3 L600.00 251.5 L600.25 250.5 L600.50 250.2 L600.75 250.5 L601.00 252.2 L601.25 249.9 L601.50 251.2 L601.75 252.1 L602.00 248.9 L602.25 252.2 L602.50 251.3 L602.75 252.6 L603.00 251.8 L603.25 251.9 L603.50 252.0 L603.75 251.5 L604.00 252.8 L604.25 253.5 L604.50 251.3 L604.75 252.0 L605.00 252.7 L605.25 252.4 L605.50 255.3 L605.75 254.1 L606.00 255.0 L606.25 254.4 L606.50 252.7 L606.75 254.4 L607.00 254.3 L607.25 253.7 L607.50 253.5 L607.75 255.4 L608.00 255.0 L608.25 255.5 L608.50 254.7 L608.75 255.5 L609.00 256.8 L609.25 255.8 L609.50 256.6 L609.75 257.6 L610.00 258.0 L610.25 257.6 L610.50 256.7 L610.75 258.3 L611.00 257.3 L611.25 258.3 L611.50 260.0 L611.75 257.5 L612.00 255.2 L612.25 254.3 L612.50 254.7 L612.75 255.3 L613.00 253.9 L613.25 252.4 L613.50 252.1 L613.75 249.8 L614.00 251.2 L614.25 248.9 L614.50 249.9 L614.75 253.2 L615.00 248.2 L615.25 252.2 L615.50 248.4 L615.75 249.5 L616.00 249.7 L616.25 249.0 L616.50 248.5 L616.75 251.5 L617.00 249.3 L617.25 251.8 L617.50 251.1 L617.75 250.7 L618.00 251.2 L618.25 251.5 L618.50 251.0 L618.75 249.9 L619.00 249.6 L619.25 250.7 L619.50 250.6 L619.75 251.3 L620.00 250.6 L620.25 251.0 L620.50 246.4 L620.75 252.1 L621.00 249.9 L621.25 249.8 L621.50 248.9 L621.75 248.9 L622.00 250.6 L622.25 249.3 L622.50 249.6 L622.75 251.6 L623.00 249.3 L623.25 249.3 L623.50 248.7 L623.75 248.2 L624.00 249.3 L624.25 248.4 L624.50 246.3 L624.75 248.5 L625.00 246.0 L625.25 249.4 L625.50 247.9 L625.75 248.4 L626.00 248.9 L626.25 249.1 L626.50 249.4 L626.75 249.8 L627.00 249.5 L627.25 249.4 L627.50 252.8 L627.75 250.4 L628.00 250.9 L628.25 252.3 L628.50 252.2 L628.75 250.6 L629.00 252.1 L629.25 252.0 L629.50 252.6 L629.75 252.6 L630.00 252.5 L630.25 254.7 L630.50 252.6 L630.75 252.0 L631.00 253.4 L631.25 251.7 L631.50 253.6 L631.75 253.0 L632.00 253.4 L632.25 253.2 L632.50 251.8 L632.75 253.2 L633.00 250.2 L633.25 251.6 L633.50 251.3 L633.75 252.3 L634.00 252.3 L634.25 251.2 L634.50 251.2 L634.75 250.0 L635.00 251.9 L635.25 250.5 L635.50 251.6 L635.75 251.9 L636.00 249.5 L636.25 250.6 L636.50 250.6 L636.75 253.5 L637.00 252.6 L637.25 252.1 L637.50 249.9 L637.75 250.4 L638.00 252.2 L638.25 250.6 L638.50 251.8 L638.75 250.5 L639.00 252.9 L639.25 253.7 L639.50 252.2 L639.75 252.9 L640.00 253.0 L640.25 252.3 L640.50 251.4 L640.75 253.2 L641.00 251.5 L641.25 253.0 L641.50 251.5 L641.75 253.4 L642.00 252.8 L642.25 253.3 L642.50 251.9 L642.75 254.4 L643.00 250.7 L643.25 253.2 L643.50 250.4 L643.75 253.0 L644.00 253.9 L644.25 253.9 L644.50 252.8 L644.75 253.7 L645.00 254.6 L645.25 255.5 L645.50 255.3 L645.75 254.2 L646.00 256.0 L646.25 254.3 L646.50 255.8 L646.75 257.4 L647.00 255.6 L647.25 255.9 L647.50 254.8 L647.75 253.7 L648.00 255.6 L648.25 254.8 L648.50 254.1 L648.75 254.3 L649.00 254.0 L649.25 254.5 L649.50 253.5 L649.75 252.8 L650.00 252.0 L650.25 250.9 L650.50 250.8 L650.75 250.7 L651.00 250.9 L651.25 249.5 L651.50 248.1 L651.75 248.1 L652.00 248.2 L652.25 249.7 L652.50 247.5 L652.75 248.1 L653.00 250.4 L653.25 246.8 L653.50 247.4 L653.75 247.3 L654.00 246.5 L654.25 249.3 L654.50 248.1 L654.75 248.3 L655.00 248.5 L655.25 248.9 L655.50 244.8 L655.75 248.7 L656.00 248.2 L656.25 248.1 L656.50 248.4 L656.75 246.5 L657.00 248.0 L657.25 248.4 L657.50 250.9 L657.75 247.0 L658.00 248.3 L658.25 249.9 L658.50 249.6 L658.75 248.9 L659.00 246.9 L659.25 248.6 L659.50 248.5 L659.75 247.9 L660.00 247.1 L660.25 247.4 L660.50 247.8 L660.75 246.2 L661.00 248.1 L661.25 247.9 L661.50 248.1 L661.75 248.6 L662.00 247.6 L662.25 248.6 L662.50 247.2 L662.75 246.3 L663.00 246.8 L663.25 247.2 L663.50 249.9 L663.75 246.6 L664.00 247.4 L664.25 247.4 L664.50 247.4 L664.75 246.7 L665.00 247.3 L665.25 248.0 L665.50 246.1 L665.75 248.6 L666.00 247.2 L666.25 247.2 L666.50 246.0 L666.75 243.1 L667.00 246.0 L667.25 246.4 L667.50 245.2 L667.75 247.0 L668.00 245.4 L668.25 245.4 L668.50 245.1 L668.75 246.0 L669.00 245.8 L669.25 246.3 L669.50 246.0 L669.75 246.4 L670.00 245.6 L670.25 247.1 L670.50 244.1 L670.75 245.3 L671.00 246.5 L671.25 244.5 L671.50 246.6 L671.75 247.7 L672.00 243.8 L672.25 245.4 L672.50 246.5 L672.75 246.6 L673.00 247.2 L673.25 246.7 L673.50 245.7 L673.75 246.9 L674.00 247.2 L674.25 245.5 L674.50 246.3 L674.75 245.9 L675.00 245.4 L675.25 244.5 L675.50 245.4 L675.75 245.7 L676.00 246.7 L676.25 243.1 L676.50 242.8 L676.75 246.0 L677.00 243.8 L677.25 245.3 L677.50 244.2 L677.75 246.1 L678.00 244.2 L678.25 242.9 L678.50 241.5 L678.75 245.9 L679.00 244.7 L679.25 243.2 L679.50 244.3 L679.75 243.5 L680.00 245.1 L680.25 242.5 L680.50 244.0 L680.75 242.5 L681.00 242.7 L681.25 243.2 L681.50 241.8 L681.75 245.5 L682.00 242.8 L682.25 240.9 L682.50 242.4 L682.75 242.3 L683.00 241.0 L683.25 241.3 L683.50 241.3 L683.75 239.9 L684.00 241.8 L684.25 239.5 L684.50 239.5 L684.75 241.1 L685.00 241.3 L685.25 242.1 L685.50 241.8 L685.75 241.1 L686.00 240.5 L686.25 240.2 L686.50 240.2 L686.75 240.1 L687.00 239.5 L687.25 243.7 L687.50 240.3 L687.75 240.4 L688.00 241.2 L688.25 240.5 L688.50 240.7 L688.75 239.1 L689.00 239.8 L689.25 242.2 L689.50 243.6 L689.75 240.1 L690.00 240.2 L690.25 239.5 L690.50 239.6 L690.75 240.6 L691.00 241.2 L691.25 242.6 L691.50 240.0 L691.75 240.2 L692.00 241.8 L692.25 240.8 L692.50 240.3 L692.75 241.0 L693.00 240.8 L693.25 242.1 L693.50 240.9 L693.75 241.7 L694.00 240.6 L694.25 241.8 L694.50 239.9 L694.75 242.0 L695.00 242.2 L695.25 241.8 L695.50 241.2 L695.75 240.8 L696.00 242.4 L696.25 243.0 L696.50 241.6 L696.75 241.5 L697.00 241.2 L697.25 241.9 L697.50 240.8 L697.75 242.2 L698.00 241.6 L698.25 241.1 L698.50 241.6 L698.75 242.0 L699.00 240.9 L699.25 241.8 L699.50 244.1 L699.75 242.2 L700.00 242.4 L700.25 242.5 L700.50 242.7 L700.75 242.1 L701.00 240.8 L701.25 242.0 L701.50 242.6 L701.75 242.1 L702.00 246.3 L702.25 242.8 L702.50 244.8 L702.75 243.6 L703.00 243.1 L703.25 242.9 L703.50 244.3 L703.75 245.9 L704.00 243.7 L704.25 243.8 L704.50 243.1 L704.75 246.0 L705.00 242.3 L705.25 242.5 L705.50 242.3 L705.75 244.4 L706.00 243.2 L706.25 243.5 L706.50 240.9 L706.75 243.0 L707.00 241.5 L707.25 245.3 L707.50 242.4 L707.75 242.5 L708.00 242.2 L708.25 242.4 L708.50 241.6 L708.75 240.7 L709.00 240.6 L709.25 241.5 L709.50 240.0 L709.75 240.5 L710.00 240.4 L710.25 239.2 L710.50 239.2 L710.75 241.1 L711.00 237.7 L711.25 238.6 L711.50 239.0 L711.75 238.7 L712.00 237.3 L712.25 239.2 L712.50 239.0 L712.75 238.2 L713.00 237.9 L713.25 239.5 L713.50 239.4 L713.75 238.9 L714.00 237.4 L714.25 237.5 L714.50 239.7 L714.75 239.4 L715.00 239.1 L715.25 237.4 L715.50 240.0 L715.75 236.5 L716.00 239.3 L716.25 238.8 L716.50 240.1 L716.75 237.0 L717.00 239.5 L717.25 241.4 L717.50 238.2 L717.75 239.3 L718.00 240.3 L718.25 242.1 L718.50 242.3 L718.75 240.3 L719.00 240.9 L719.25 239.5 L719.50 241.2 L719.75 241.0 L720.00 240.6 L720.25 240.1 L720.50 238.9 L720.75 240.7 L721.00 238.7 L721.25 240.4 L721.50 239.2 L721.75 238.6 L722.00 239.3 L722.25 241.2 L722.50 239.6 L722.75 240.1 L723.00 242.5 L723.25 238.7 L723.50 239.9 L723.75 242.1 L724.00 240.1 L724.25 240.3 L724.50 241.4 L724.75 243.5 L725.00 241.6 L725.25 244.8 L725.50 242.4 L725.75 240.9 L726.00 243.8 L726.25 243.2 L726.50 245.3 L726.75 245.5 L727.00 246.2 L727.25 245.1 L727.50 244.1 L727.75 245.7 L728.00 244.4 L728.25 245.1 L728.50 244.7 L728.75 245.7 L729.00 244.4 L729.25 244.2 L729.50 247.8 L729.75 246.2 L730.00 246.3 L730.25 246.6 L730.50 245.5 L730.75 245.7 L731.00 244.5 L731.25 245.9 L731.50 247.0 L731.75 246.0 L732.00 248.4 L732.25 247.4 L732.50 246.7 L732.75 246.8 L733.00 247.0 L733.25 247.4 L733.50 247.9 L733.75 248.0 L734.00 249.1 L734.25 249.5 L734.50 245.7 L734.75 250.3 L735.00 248.7 L735.25 249.3 L735.50 248.7 L735.75 249.1 L736.00 249.3 L736.25 252.0 L736.50 249.8 L736.75 250.9 L737.00 250.4 L737.25 248.9 L737.50 248.7 L737.75 249.5 L738.00 247.8 L738.25 250.3 L738.50 251.3 L738.75 247.3 L739.00 249.3 L739.25 247.5 L739.50 247.5 L739.75 247.1 L740.00 248.6 L740.25 247.6 L740.50 248.3 L740.75 248.7 L741.00 247.4 L741.25 247.1 L741.50 247.1 L741.75 246.8 L742.00 246.1 L742.25 247.2 L742.50 246.3 L742.75 244.9 L743.00 245.4 L743.25 245.7 L743.50 246.0 L743.75 242.6 L744.00 245.2 L744.25 246.4 L744.50 245.6 L744.75 242.9 L745.00 243.5 L745.25 244.2 L745.50 244.8 L745.75 242.2 L746.00 244.1 L746.25 244.2 L746.50 243.4 L746.75 242.9 L747.00 242.7 L747.25 241.2 L747.50 243.6 L747.75 242.0 L748.00 239.5 L748.25 240.8 L748.50 240.8 L748.75 239.3 L749.00 238.3 L749.25 239.1 L749.50 237.9 L749.75 238.3 L750.00 239.4 L750.25 238.1 L750.50 237.0 L750.75 237.0 L751.00 238.4 L751.25 238.6 L751.50 237.6 L751.75 238.4 L752.00 238.3 L752.25 236.8 L752.50 238.4 L752.75 241.6 L753.00 238.9 L753.25 238.4 L753.50 238.2 L753.75 239.0 L754.00 237.4 L754.25 238.7 L754.50 238.2 L754.75 238.0 L755.00 237.9 L755.25 237.3 L755.50 238.3 L755.75 238.1 L756.00 238.4 L756.25 238.7 L756.50 239.7 L756.75 242.3 L757.00 238.4 L757.25 238.8 L757.50 239.7 L757.75 239.2 L758.00 238.7 L758.25 236.2 L758.50 239.6 L758.75 235.7 L759.00 240.1 L759.25 237.7 L759.50 238.8 L759.75 239.4 L760.00 240.4 L760.25 238.9 L760.50 238.1 L760.75 239.3 L761.00 238.7 L761.25 238.5 L761.50 240.8 L761.75 239.6 L762.00 239.9 L762.25 238.8 L762.50 241.8 L762.75 238.5 L763.00 238.3 L763.25 238.5 L763.50 238.1 L763.75 237.9 L764.00 236.4 L764.25 237.2 L764.50 238.8 L764.75 237.8 L765.00 238.6 L765.25 236.9 L765.50 235.6 L765.75 239.5 L766.00 236.1 L766.25 234.9 L766.50 236.5 L766.75 236.5 L767.00 235.7 L767.25 234.1 L767.50 234.9 L767.75 234.7 L768.00 235.6 L768.25 235.2 L768.50 235.0 L768.75 235.0 L769.00 233.8 L769.25 234.6 L769.50 234.0 L769.75 231.5 L770.00 234.9 L770.25 234.8 L770.50 236.6 L770.75 235.6 L771.00 235.5 L771.25 234.9 L771.50 236.7 L771.75 236.3 L772.00 238.9 L772.25 237.9 L772.50 237.9 L772.75 238.6 L773.00 240.5 L773.25 237.9 L773.50 238.3 L773.75 237.9 L774.00 237.5 L774.25 239.8 L774.50 239.0 L774.75 239.4 L775.00 242.1 L775.25 240.8 L775.50 241.7 L775.75 241.2 L776.00 240.8 L776.25 240.2 L776.50 242.6 L776.75 242.6 L777.00 242.3 L777.25 242.4 L777.50 243.3 L777.75 243.5 L778.00 242.7 L778.25 242.6 L778.50 241.9 L778.75 242.1 L779.00 241.4 L779.25 243.7 L779.50 241.6 L779.75 242.5 L780.00 241.5" stroke="#ffff11" stroke-width="1.25"/>
<path d="M49.50 343.4 L49.75 343.5 L50.00 343.5 L50.25 343.7 L50.50 344.1 L50.75 344.0 L51.00 343.5 L51.25 344.5 L51.50 343.5 L51.75 343.5 L52.00 344.7 L52.25 344.5 L52.50 344.7 L52.75 344.6 L53.00 344.6 L53.25 345.1 L53.50 343.6 L53.75 343.7 L54.00 343.3 L54.25 342.7 L54.50 342.7 L54.75 343.8 L55.00 343.8 L55.25 345.2 L55.50 344.2 L55.75 343.8 L56.00 343.5 L56.25 345.8 L56.50 346.6 L56.75 345.9 L57.00 346.4 L57.25 345.2 L57.50 344.8 L57.75 345.2 L58.00 344.3 L58.25 345.8 L58.50 343.8 L58.75 343.2 L59.00 346.8 L59.25 346.2 L59.50 344.7 L59.75 345.3 L60.00 343.6 L60.25 346.5 L60.50 344.7 L60.75 345.8 L61.00 344.1 L61.25 345.1 L61.50 345.1 L61.75 346.1 L62.00 345.6 L62.25 345.6 L62.50 345.7 L62.75 346.4 L63.00 345.8 L63.25 346.4 L63.50 345.2 L63.75 344.9 L64.00 347.5 L64.25 345.9 L64.50 345.5 L64.75 347.0 L65.00 347.6 L65.25 346.8 L65.50 348.0 L65.75 348.0 L66.00 347.3 L66.25 347.6 L66.50 346.6 L66.75 346.7 L67.00 349.4 L67.25 349.5 L67.50 348.4 L67.75 348.9 L68.00 346.8 L68.25 348.2 L68.50 348.6 L68.75 347.4 L69.00 347.5 L69.25 346.5 L69.50 347.7 L69.75 346.5 L70.00 348.1 L70.25 349.6 L70.50 347.9 L70.75 348.6 L71.00 350.3 L71.25 351.8 L71.50 349.7 L71.75 351.2 L72.00 350.4 L72.25 351.1 L72.50 351.4 L72.75 349.5 L73.00 351.1 L73.25 350.9 L73.50 348.0 L73.75 354.1 L74.00 351.6 L74.25 351.1 L74.50 350.3 L74.75 349.2 L75.00 349.4 L75.25 351.5 L75.50 348.3 L75.75 351.4 L76.00 350.8 L76.25 351.0 L76.50 351.9 L76.75 352.5 L77.00 350.7 L77.25 349.8 L77.50 352.8 L77.75 351.8 L78.00 352.6 L78.25 353.3 L78.50 352.3 L78.75 352.8 L79.00 354.1 L79.25 353.1 L79.50 354.0 L79.75 352.4 L80.00 354.8 L80.25 352.2 L80.50 352.2 L80.75 351.3 L81.00 351.8 L81.25 351.5 L81.50 349.4 L81.75 350.9 L82.00 350.5 L82.25 350.4 L82.50 351.7 L82.75 349.9 L83.00 350.5 L83.25 348.8 L83.50 347.2 L83.75 348.9 L84.00 347.3 L84.25 349.0 L84.50 349.9 L84.75 349.2 L85.00 349.1 L85.25 350.4 L85.50 350.2 L85.75 351.0 L86.00 351.6 L86.25 350.0 L86.50 351.2 L86.75 351.3 L87.00 350.8 L87.25 350.0 L87.50 349.5 L87.75 347.4 L88.00 349.8 L88.25 350.3 L88.50 348.5 L88.75 350.2 L89.00 349.1 L89.25 351.8 L89.50 349.8 L89.75 351.3 L90.00 349.9 L90.25 349.1 L90.50 350.3 L90.75 348.5 L91.00 348.5 L91.25 349.4 L91.50 349.4 L91.75 351.3 L92.00 349.8 L92.25 350.0 L92.50 349.4 L92.75 349.5 L93.00 352.9 L93.25 350.4 L93.50 350.2 L93.75 350.4 L94.00 351.5 L94.25 350.9 L94.50 350.4 L94.75 350.6 L95.00 351.3 L95.25 351.2 L95.50 352.2 L95.75 352.2 L96.00 351.7 L96.25 352.5 L96.50 352.0 L96.75 352.0 L97.00 354.0 L97.25 353.3 L97.50 354.2 L97.75 355.6 L98.00 356.6 L98.25 356.7 L98.50 355.7 L98.75 355.1 L99.00 356.1 L99.25 352.8 L99.50 354.7 L99.75 355.8 L100.00 355.3 L100.25 356.1 L100.50 356.6 L100.75 357.0 L101.00 356.7 L101.25 360.9 L101.50 358.7 L101.75 359.2 L102.00 358.3 L102.25 358.7 L102.50 360.3 L102.75 361.2 L103.00 360.1 L103.25 358.8 L103.50 360.3 L103.75 360.7 L104.00 360.5 L104.25 361.7 L104.50 363.4 L104.75 361.7 L105.00 364.3 L105.25 363.4 L105.50 364.9 L105.75 367.2 L106.00 363.7 L106.25 362.8 L106.50 366.8 L106.75 365.6 L107.00 364.6 L107.25 365.9 L107.50 366.5 L107.75 367.1 L108.00 367.5 L108.25 368.8 L108.50 367.0 L108.75 368.7 L109.00 367.4 L109.25 367.8 L109.50 368.9 L109.75 370.8 L110.00 369.9 L110.25 369.9 L110.50 369.7 L110.75 369.3 L111.00 369.9 L111.25 371.4 L111.50 372.3 L111.75 375.7 L112.00 368.1 L112.25 370.6 L112.50 372.2 L112.75 369.0 L113.00 369.7 L113.25 368.6 L113.50 368.5 L113.75 368.1 L114.00 366.5 L114.25 368.0 L114.50 368.9 L114.75 366.8 L115.00 366.2 L115.25 367.0 L115.50 365.9 L115.75 366.6 L116.00 365.6 L116.25 365.3 L116.50 365.9 L116.75 365.6 L117.00 366.7 L117.25 364.9 L117.50 367.0 L117.75 366.3 L118.00 367.0 L118.25 366.1 L118.50 370.1 L118.75 365.6 L119.00 368.0 L119.25 366.5 L119.50 364.5 L119.75 366.7 L120.00 367.3 L120.25 368.3 L120.50 367.3 L120.75 368.5 L121.00 369.3 L121.25 369.5 L121.50 369.3 L121.75 368.1 L122.00 369.5 L122.25 368.7 L122.50 370.4 L122.75 371.2 L123.00 373.1 L123.25 370.1 L123.50 371.1 L123.75 371.8 L124.00 370.6 L124.25 371.3 L124.50 372.3 L124.75 370.5 L125.00 371.3 L125.25 373.2 L125.50 373.4 L125.75 370.4 L126.00 372.8 L126.25 371.1 L126.50 374.7 L126.75 373.9 L127.00 372.1 L127.25 373.3 L127.50 374.6 L127.75 375.3 L128.00 372.9 L128.25 372.0 L128.50 373.9 L128.75 374.0 L129.00 375.7 L129.25 374.9 L129.50 373.8 L129.75 374.8 L130.00 374.6 L130.25 377.5 L130.50 375.7 L130.75 375.9 L131.00 376.0 L131.25 377.2 L131.50 378.6 L131.75 376.7 L132.00 378.1 L132.25 377.5 L132.50 377.5 L132.75 379.1 L133.00 378.8 L133.25 378.3 L133.50 378.5 L133.75 379.4 L134.00 378.4 L134.25 379.9 L134.50 377.5 L134.75 377.9 L135.00 378.1 L135.25 376.7 L135.50 375.7 L135.75 377.3 L136.00 376.0 L136.25 376.8 L136.50 376.5 L136.75 376.2 L137.00 377.0 L137.25 374.8 L137.50 375.3 L137.75 376.1 L138.00 377.1 L138.25 376.3 L138.50 378.0 L138.75 377.0 L139.00 377.7 L139.25 376.3 L139.50 377.4 L139.75 376.8 L140.00 377.6 L140.25 377.5 L140.50 377.6 L140.75 379.9 L141.00 378.8 L141.25 380.3 L141.50 377.7 L141.75 379.9 L142.00 380.9 L142.25 380.4 L142.50 380.0 L142.75 379.5 L143.00 380.0 L143.25 378.8 L143.50 379.6 L143.75 376.6 L144.00 379.6 L144.25 379.1 L144.50 378.5 L144.75 375.9 L145.00 377.5 L145.25 377.4 L145.50 377.0 L145.75 376.5 L146.00 375.2 L146.25 376.9 L146.50 375.9 L146.75 376.4 L147.00 374.8 L147.25 375.8 L147.50 375.7 L147.75 375.5 L148.00 372.7 L148.25 376.1 L148.50 375.3 L148.75 375.6 L149.00 373.7 L149.25 375.1 L149.50 375.6 L149.75 376.8 L150.00 376.3 L150.25 377.7 L150.50 376.6 L150.75 379.2 L151.00 377.6 L151.25 378.6 L151.50 376.4 L151.75 379.1 L152.00 382.1 L152.25 377.4 L152.50 378.0 L152.75 378.7 L153.00 379.4 L153.25 380.1 L153.50 380.1 L153.75 380.2 L154.00 380.3 L154.25 382.6 L154.50 380.4 L154.75 378.7 L155.00 380.1 L155.25 381.4 L155.50 382.0 L155.75 381.3 L156.00 381.6 L156.25 380.0 L156.50 380.9 L156.75 380.8 L157.00 381.1 L157.25 380.9 L157.50 385.5 L157.75 380.8 L158.00 379.3 L158.25 381.9 L158.50 380.6 L158.75 380.2 L159.00 379.6 L159.25 378.7 L159.50 379.1 L159.75 377.5 L160.00 378.0 L160.25 377.3 L160.50 377.8 L160.75 377.8 L161.00 377.8 L161.25 375.6 L161.50 378.9 L161.75 377.4 L162.00 376.4 L162.25 376.2 L162.50 377.6 L162.75 376.0 L163.00 376.5 L163.25 376.7 L163.50 379.3 L163.75 378.0 L164.00 379.0 L164.25 379.6 L164.50 379.1 L164.75 376.8 L165.00 377.7 L165.25 379.1 L165.50 378.7 L165.75 377.3 L166.00 378.1 L166.25 379.6 L166.50 382.0 L166.75 379.7 L167.00 378.7 L167.25 379.1 L167.50 380.3 L167.75 381.0 L168.00 381.5 L168.25 378.5 L168.50 381.6 L168.75 380.5 L169.00 381.5 L169.25 382.6 L169.50 384.8 L169.75 380.9 L170.00 384.0 L170.25 385.3 L170.50 383.3 L170.75 382.4 L171.00 383.3 L171.25 382.7 L171.50 382.8 L171.75 381.6 L172.00 379.9 L172.25 381.7 L172.50 378.3 L172.75 381.4 L173.00 381.2 L173.25 381.9 L173.50 384.4 L173.75 383.0 L174.00 380.6 L174.25 382.3 L174.50 381.3 L174.75 383.1 L175.00 383.4 L175.25 385.1 L175.50 385.6 L175.75 385.8 L176.00 385.7 L176.25 387.5 L176.50 388.4 L176.75 385.3 L177.00 386.6 L177.25 385.7 L177.50 387.6 L177.75 386.4 L178.00 385.8 L178.25 385.6 L178.50 384.9 L178.75 385.6 L179.00 385.3 L179.25 385.9 L179.50 385.1 L179.75 384.0 L180.00 382.9 L180.25 382.5 L180.50 383.7 L180.75 383.6 L181.00 382.5 L181.25 384.3 L181.50 383.1 L181.75 379.9 L182.00 383.1 L182.25 381.3 L182.50 383.4 L182.75 384.2 L183.00 383.2 L183.25 382.4 L183.50 384.7 L183.75 383.4 L184.00 384.6 L184.25 382.9 L184.50 382.7 L184.75 381.7 L185.00 382.7 L185.25 382.9 L185.50 382.0 L185.75 380.9 L186.00 381.6 L186.25 382.2 L186.50 382.7 L186.75 384.4 L187.00 383.5 L187.25 383.6 L187.50 383.9 L187.75 382.1 L188.00 385.2 L188.25 384.4 L188.50 384.3 L188.75 384.5 L189.00 384.1 L189.25 386.4 L189.50 385.1 L189.75 387.3 L190.00 387.3 L190.25 388.2 L190.50 387.1 L190.75 387.2 L191.00 384.7 L191.25 387.4 L191.50 389.5 L191.75 387.1 L192.00 385.7 L192.25 386.7 L192.50 386.8 L192.75 386.1 L193.00 389.1 L193.25 387.5 L193.50 388.3 L193.75 387.8 L194.00 388.1 L194.25 388.2 L194.50 386.6 L194.75 387.6 L195.00 388.5 L195.25 387.5 L195.50 386.3 L195.75 386.6 L196.00 387.4 L196.25 387.3 L196.50 387.3 L196.75 387.8 L197.00 388.4 L197.25 387.0 L197.50 387.4 L197.75 388.1 L198.00 388.1 L198.25 388.8 L198.50 388.9 L198.75 386.8 L199.00 385.8 L199.25 385.3 L199.50 384.8 L199.75 384.5 L200.00 381.4 L200.25 384.5 L200.50 384.2 L200.75 384.9 L201.00 384.7 L201.25 383.9 L201.50 384.7 L201.75 386.0 L202.00 386.5 L202.25 385.3 L202.50 384.4 L202.75 387.7 L203.00 386.5 L203.25 385.3 L203.50 384.8 L203.75 386.6 L204.00 385.8 L204.25 387.7 L204.50 386.5 L204.75 388.4 L205.00 386.6 L205.25 384.7 L205.50 386.8 L205.75 387.8 L206.00 390.2 L206.25 386.7 L206.50 387.7 L206.75 388.1 L207.00 387.5 L207.25 388.5 L207.50 387.6 L207.75 392.9 L208.00 386.9 L208.25 388.2 L208.50 387.6 L208.75 387.9 L209.00 387.4 L209.25 389.1 L209.50 388.9 L209.75 390.2 L210.00 388.3 L210.25 387.3 L210.50 388.3 L210.75 389.4 L211.00 387.9 L211.25 390.0 L211.50 389.2 L211.75 390.1 L212.00 388.0 L212.25 389.8 L212.50 388.2 L212.75 387.7 L213.00 389.2 L213.25 388.9 L213.50 389.4 L213.75 386.8 L214.00 387.9 L214.25 388.3 L214.50 387.7 L214.75 387.5 L215.00 389.3 L215.25 388.5 L215.50 388.7 L215.75 388.2 L216.00 389.3 L216.25 392.3 L216.50 387.6 L216.75 387.6 L217.00 388.2 L217.25 389.3 L217.50 390.7 L217.75 388.3 L218.00 388.7 L218.25 388.2 L218.50 387.4 L218.75 387.2 L219.00 387.4 L219.25 386.8 L219.50 389.8 L219.75 388.2 L220.00 386.7 L220.25 388.5 L220.50 387.2 L220.75 385.8 L221.00 388.7 L221.25 386.6 L221.50 387.6 L221.75 389.0 L222.00 388.4 L222.25 387.7 L222.50 388.9 L222.75 388.5 L223.00 387.1 L223.25 387.7 L223.50 387.9 L223.75 388.2 L224.00 386.2 L224.25 386.9 L224.50 387.9 L224.75 387.2 L225.00 386.8 L225.25 387.1 L225.50 388.9 L225.75 387.4 L226.00 387.5 L226.25 388.2 L226.50 388.0 L226.75 387.9 L227.00 388.8 L227.25 387.5 L227.50 389.7 L227.75 387.8 L228.00 387.4 L228.25 387.8 L228.50 388.4 L228.75 387.8 L229.00 385.3 L229.25 390.7 L229.50 385.1 L229.75 390.1 L230.00 387.9 L230.25 391.4 L230.50 389.4 L230.75 389.1 L231.00 388.2 L231.25 390.6 L231.50 387.6 L231.75 388.8 L232.00 388.0 L232.25 389.5 L232.50 389.3 L232.75 388.1 L233.00 386.4 L233.25 388.7 L233.50 388.4 L233.75 389.4 L234.00 390.4 L234.25 389.4 L234.50 390.2 L234.75 389.0 L235.00 389.5 L235.25 389.1 L235.50 389.7 L235.75 390.1 L236.00 389.4 L236.25 389.5 L236.50 390.2 L236.75 390.9 L237.00 388.4 L237.25 391.3 L237.50 390.2 L237.75 391.2 L238.00 389.5 L238.25 391.4 L238.50 390.8 L238.75 391.1 L239.00 389.6 L239.25 393.5 L239.50 393.0 L239.75 391.8 L240.00 391.7 L240.25 392.1 L240.50 387.8 L240.75 391.1 L241.00 391.6 L241.25 391.7 L241.50 390.1 L241.75 390.3 L242.00 389.5 L242.25 391.4 L242.50 390.0 L242.75 389.0 L243.00 388.6 L243.25 387.6 L243.50 389.3 L243.75 388.8 L244.00 387.8 L244.25 387.9 L244.50 390.1 L244.75 388.0 L245.00 389.8 L245.25 387.9 L245.50 388.8 L245.75 388.2 L246.00 388.6 L246.25 387.2 L246.50 388.0 L246.75 389.7 L247.00 387.2 L247.25 387.2 L247.50 386.2 L247.75 387.0 L248.00 386.3 L248.25 388.8 L248.50 386.4 L248.75 386.8 L249.00 388.6 L249.25 387.9 L249.50 385.3 L249.75 386.1 L250.00 387.1 L250.25 387.4 L250.50 386.9 L250.75 385.8 L251.00 386.1 L251.25 387.0 L251.50 388.1 L251.75 387.2 L252.00 386.8 L252.25 387.5 L252.50 387.6 L252.75 386.3 L253.00 387.3 L253.25 386.6 L253.50 388.0 L253.75 386.4 L254.00 387.3 L254.25 387.6 L254.50 386.2 L254.75 388.1 L255.00 387.7 L255.25 388.0 L255.50 389.0 L255.75 389.0 L256.00 387.8 L256.25 386.1 L256.50 389.8 L256.75 388.4 L257.00 390.2 L257.25 389.4 L257.50 389.0 L257.75 389.6 L258.00 389.0 L258.25 390.4 L258.50 391.7 L258.75 390.5 L259.00 392.6 L259.25 392.2 L259.50 392.6 L259.75 392.0 L260.00 393.6 L260.25 392.2 L260.50 394.0 L260.75 395.0 L261.00 393.9 L261.25 393.6 L261.50 397.0 L261.75 392.9 L262.00 394.1 L262.25 392.2 L262.50 393.2 L262.75 393.9 L263.00 394.9 L263.25 395.6 L263.50 395.4 L263.75 392.8 L264.00 396.7 L264.25 397.4 L264.50 394.1 L264.75 395.4 L265.00 391.7 L265.25 392.3 L265.50 392.3 L265.75 390.1 L266.00 390.2 L266.25 389.6 L266.50 389.6 L266.75 390.1 L267.00 389.2 L267.25 389.6 L267.50 389.7 L267.75 390.2 L268.00 391.4 L268.25 391.3 L268.50 389.5 L268.75 389.5 L269.00 390.1 L269.25 390.9 L269.50 392.5 L269.75 390.6 L270.00 391.1 L270.25 390.8 L270.50 391.3 L270.75 391.3 L271.00 391.5 L271.25 391.6 L271.50 392.0 L271.75 392.5 L272.00 391.2 L272.25 391.5 L272.50 391.6 L272.75 391.2 L273.00 391.0 L273.25 391.2 L273.50 390.8 L273.75 391.0 L274.00 392.1 L274.25 392.4 L274.50 392.0 L274.75 391.8 L275.00 393.1 L275.25 392.7 L275.50 391.9 L275.75 391.6 L276.00 393.6 L276.25 392.5 L276.50 390.9 L276.75 393.8 L277.00 391.7 L277.25 392.7 L277.50 392.5 L277.75 390.3 L278.00 392.0 L278.25 392.5 L278.50 393.7 L278.75 392.3 L279.00 393.1 L279.25 392.7 L279.50 387.6 L279.75 391.2 L280.00 391.3 L280.25 392.2 L280.50 392.7 L280.75 393.3 L281.00 391.8 L281.25 393.2 L281.50 394.2 L281.75 394.1 L282.00 393.0 L282.25 394.1 L282.50 393.0 L282.75 392.7 L283.00 388.5 L283.25 392.0 L283.50 392.8 L283.75 393.5 L284.00 393.3 L284.25 390.8 L284.50 393.7 L284.75 393.0 L285.00 392.6 L285.25 393.5 L285.50 392.2 L285.75 392.5 L286.00 393.0 L286.25 392.8 L286.50 394.2 L286.75 392.8 L287.00 393.7 L287.25 393.6 L287.50 393.7 L287.75 393.6 L288.00 394.0 L288.25 394.3 L288.50 395.7 L288.75 395.0 L289.00 396.4 L289.25 396.5 L289.50 395.7 L289.75 397.0 L290.00 396.5 L290.25 396.7 L290.50 396.3 L290.75 397.3 L291.00 397.5 L291.25 396.0 L291.50 397.6 L291.75 398.7 L292.00 396.7 L292.25 397.0 L292.50 398.0 L292.75 399.1 L293.00 399.0 L293.25 398.4 L293.50 397.5 L293.75 398.1 L294.00 397.9 L294.25 399.7 L294.50 398.8 L294.75 397.4 L295.00 396.6 L295.25 398.5 L295.50 399.3 L295.75 397.4 L296.00 396.9 L296.25 398.7 L296.50 398.0 L296.75 396.4 L297.00 397.4 L297.25 396.2 L297.50 397.6 L297.75 394.1 L298.00 398.1 L298.25 396.9 L298.50 398.2 L298.75 396.6 L299.00 396.2 L299.25 398.1 L299.50 397.1 L299.75 397.7 L300.00 398.8 L300.25 397.5 L300.50 398.3 L300.75 399.1 L301.00 400.5 L301.25 400.0 L301.50 400.3 L301.75 397.3 L302.00 401.6 L302.25 399.1 L302.50 398.6 L302.75 400.2 L303.00 398.8 L303.25 400.5 L303.50 399.2 L303.75 398.8 L304.00 397.4 L304.25 398.6 L304.50 398.9 L304.75 399.4 L305.00 399.2 L305.25 397.2 L305.50 398.3 L305.75 397.7 L306.00 396.7 L306.25 397.1 L306.50 395.1 L306.75 397.8 L307.00 394.9 L307.25 394.6 L307.50 395.8 L307.75 394.2 L308.00 395.4 L308.25 395.0 L308.50 390.5 L308.75 393.6 L309.00 390.9 L309.25 393.3 L309.50 392.9 L309.75 394.0 L310.00 391.7 L310.25 391.8 L310.50 392.0 L310.75 391.3 L311.00 389.8 L311.25 391.0 L311.50 391.1 L311.75 391.2 L312.00 391.2 L312.25 390.7 L312.50 393.2 L312.75 393.0 L313.00 391.2 L313.25 392.4 L313.50 390.4 L313.75 391.4 L314.00 392.7 L314.25 393.1 L314.50 392.2 L314.75 394.9 L315.00 391.5 L315.25 392.1 L315.50 393.7 L315.75 394.7 L316.00 393.3 L316.25 395.5 L316.50 393.6 L316.75 393.9 L317.00 393.9 L317.25 392.8 L317.50 391.9 L317.75 392.4 L318.00 393.5 L318.25 393.3 L318.50 392.2 L318.75 390.0 L319.00 392.3 L319.25 392.5 L319.50 391.3 L319.75 390.5 L320.00 390.8 L320.25 390.0 L320.50 388.6 L320.75 391.8 L321.00 389.6 L321.25 390.2 L321.50 390.1 L321.75 389.6 L322.00 389.8 L322.25 390.7 L322.50 390.6 L322.75 389.9 L323.00 390.1 L323.25 391.8 L323.50 389.5 L323.75 389.3 L324.00 389.7 L324.25 389.8 L324.50 388.5 L324.75 387.6 L325.00 386.2 L325.25 385.9 L325.50 385.9 L325.75 385.3 L326.00 385.4 L326.25 383.0 L326.50 387.6 L326.75 386.2 L327.00 383.7 L327.25 382.4 L327.50 384.3 L327.75 384.0 L328.00 382.7 L328.25 382.3 L328.50 384.7 L328.75 382.7 L329.00 381.1 L329.25 381.2 L329.50 382.4 L329.75 380.3 L330.00 381.8 L330.25 381.3 L330.50 380.8 L330.75 378.8 L331.00 379.3 L331.25 378.8 L331.50 377.6 L331.75 380.1 L332.00 379.4 L332.25 377.8 L332.50 376.2 L332.75 379.6 L333.00 376.8 L333.25 378.4 L333.50 377.4 L333.75 379.0 L334.00 380.3 L334.25 378.4 L334.50 381.6 L334.75 379.8 L335.00 381.4 L335.25 382.3 L335.50 381.8 L335.75 381.4 L336.00 381.5 L336.25 381.8 L336.50 383.1 L336.75 382.9 L337.00 382.9 L337.25 382.9 L337.50 383.7 L337.75 385.2 L338.00 385.5 L338.25 384.1 L338.50 385.3 L338.75 384.4 L339.00 388.8 L339.25 385.8 L339.50 385.0 L339.75 388.1 L340.00 385.4 L340.25 389.4 L340.50 386.3 L340.75 386.0 L341.00 386.1 L341.25 386.4 L341.50 384.1 L341.75 387.8 L342.00 388.1 L342.25 386.4 L342.50 387.2 L342.75 387.3 L343.00 387.1 L343.25 387.8 L343.50 387.7 L343.75 387.0 L344.00 387.2 L344.25 386.5 L344.50 386.9 L344.75 388.0 L345.00 391.0 L345.25 386.7 L345.50 386.2 L345.75 387.3 L346.00 386.9 L346.25 387.1 L346.50 385.0 L346.75 390.7 L347.00 389.5 L347.25 388.1 L347.50 388.6 L347.75 387.9 L348.00 389.7 L348.25 387.7 L348.50 387.7 L348.75 387.9 L349.00 387.1 L349.25 387.7 L349.50 387.2 L349.75 388.9 L350.00 387.5 L350.25 389.3 L350.50 388.6 L350.75 388.0 L351.00 388.0 L351.25 389.2 L351.50 389.5 L351.75 387.9 L352.00 389.0 L352.25 390.2 L352.50 387.7 L352.75 388.2 L353.00 388.8 L353.25 389.7 L353.50 389.3 L353.75 388.3 L354.00 388.8 L354.25 386.7 L354.50 387.3 L354.75 386.6 L355.00 386.4 L355.25 385.2 L355.50 387.1 L355.75 384.8 L356.00 384.6 L356.25 385.3 L356.50 383.4 L356.75 383.1 L357.00 384.1 L357.25 383.2 L357.50 383.6 L357.75 383.8 L358.00 380.6 L358.25 383.4 L358.50 384.3 L358.75 384.2 L359.00 382.6 L359.25 382.7 L359.50 380.8 L359.75 383.0 L360.00 382.2 L360.25 381.3 L360.50 380.2 L360.75 380.6 L361.00 380.0 L361.25 381.3 L361.50 382.6 L361.75 381.2 L362.00 380.8 L362.25 380.7 L362.50 381.3 L362.75 380.1 L363.00 382.4 L363.25 382.9 L363.50 382.0 L363.75 380.4 L364.00 381.6 L364.25 378.2 L364.50 381.4 L364.75 381.8 L365.00 380.9 L365.25 381.0 L365.50 383.4 L365.75 381.6 L366.00 382.7 L366.25 381.2 L366.50 381.2 L366.75 381.6 L367.00 381.6 L367.25 379.5 L367.50 381.4 L367.75 380.2 L368.00 380.4 L368.25 380.8 L368.50 379.0 L368.75 378.8 L369.00 382.2 L369.25 380.6 L369.50 378.9 L369.75 378.9 L370.00 379.3 L370.25 378.6 L370.50 378.4 L370.75 378.4 L371.00 378.6 L371.25 380.0 L371.50 379.1 L371.75 377.9 L372.00 378.1 L372.25 379.7 L372.50 377.4 L372.75 376.3 L373.00 375.6 L373.25 377.3 L373.50 377.6 L373.75 377.6 L374.00 376.3 L374.25 377.4 L374.50 376.3 L374.75 376.4 L375.00 375.3 L375.25 375.8 L375.50 377.0 L375.75 378.0 L376.00 375.4 L376.25 377.0 L376.50 376.1 L376.75 374.6 L377.00 377.7 L377.25 378.8 L377.50 374.3 L377.75 377.0 L378.00 376.2 L378.25 376.8 L378.50 377.8 L378.75 376.0 L379.00 379.2 L379.25 377.0 L379.50 379.3 L379.75 380.2 L380.00 379.9 L380.25 379.3 L380.50 379.2 L380.75 379.1 L381.00 384.1 L381.25 380.5 L381.50 378.5 L381.75 384.5 L382.00 380.8 L382.25 380.6 L382.50 380.6 L382.75 381.2 L383.00 381.0 L383.25 380.7 L383.50 380.1 L383.75 381.1 L384.00 380.9 L384.25 381.1 L384.50 381.4 L384.75 380.4 L385.00 382.4 L385.25 379.5 L385.50 379.7 L385.75 383.4 L386.00 382.6 L386.25 379.3 L386.50 379.5 L386.75 382.9 L387.00 382.1 L387.25 382.0 L387.50 381.1 L387.75 382.3 L388.00 382.2 L388.25 379.6 L388.50 380.0 L388.75 381.9 L389.00 381.1 L389.25 382.5 L389.50 379.0 L389.75 382.1 L390.00 379.2 L390.25 381.7 L390.50 379.0 L390.75 381.9 L391.00 381.0 L391.25 381.6 L391.50 381.1 L391.75 381.7 L392.00 380.3 L392.25 383.9 L392.50 382.2 L392.75 382.8 L393.00 381.4 L393.25 379.8 L393.50 379.6 L393.75 381.7 L394.00 380.8 L394.25 381.1 L394.50 382.2 L394.75 383.6 L395.00 382.2 L395.25 381.5 L395.50 381.9 L395.75 381.8 L396.00 383.3 L396.25 381.1 L396.50 381.0 L396.75 380.6 L397.00 378.8 L397.25 381.3 L397.50 379.4 L397.75 378.8 L398.00 378.4 L398.25 377.9 L398.50 379.3 L398.75 377.6 L399.00 379.4 L399.25 373.1 L399.50 377.9 L399.75 378.4 L400.00 376.9 L400.25 378.6 L400.50 378.5 L400.75 380.5 L401.00 378.4 L401.25 379.3 L401.50 380.0 L401.75 379.5 L402.00 379.4 L402.25 379.8 L402.50 378.9 L402.75 379.9 L403.00 381.5 L403.25 379.8 L403.50 379.0 L403.75 382.6 L404.00 381.3 L404.25 385.4 L404.50 382.0 L404.75 379.9 L405.00 381.5 L405.25 384.0 L405.50 383.2 L405.75 383.0 L406.00 383.3 L406.25 383.6 L406.50 383.2 L406.75 384.6 L407.00 383.9 L407.25 381.5 L407.50 383.7 L407.75 382.7 L408.00 384.0 L408.25 383.1 L408.50 382.2 L408.75 381.3 L409.00 381.1 L409.25 382.5 L409.50 382.7 L409.75 381.7 L410.00 381.3 L410.25 381.5 L410.50 380.2 L410.75 379.9 L411.00 379.2 L411.25 378.6 L411.50 380.8 L411.75 379.4 L412.00 379.4 L412.25 380.5 L412.50 379.4 L412.75 381.0 L413.00 379.3 L413.25 379.7 L413.50 377.5 L413.75 380.4 L414.00 379.4 L414.25 380.1 L414.50 379.8 L414.75 379.2 L415.00 379.6 L415.25 380.3 L415.50 379.2 L415.75 380.8 L416.00 379.5 L416.25 378.7 L416.50 381.0 L416.75 382.2 L417.00 378.1 L417.25 379.8 L417.50 379.6 L417.75 379.0 L418.00 380.1 L418.25 378.5 L418.50 379.7 L418.75 379.2 L419.00 377.7 L419.25 380.6 L419.50 380.5 L419.75 380.3 L420.00 376.9 L420.25 380.8 L420.50 379.3 L420.75 376.9 L421.00 379.5 L421.25 379.9 L421.50 379.9 L421.75 378.1 L422.00 381.1 L422.25 380.3 L422.50 379.5 L422.75 378.3 L423.00 379.2 L423.25 378.4 L423.50 378.3 L423.75 379.9 L424.00 379.6 L424.25 378.8 L424.50 381.9 L424.75 379.2 L425.00 378.8 L425.25 379.7 L425.50 378.1 L425.75 378.8 L426.00 379.8 L426.25 377.3 L426.50 378.5 L426.75 378.5 L427.00 377.1 L427.25 378.2 L427.50 378.0 L427.75 377.1 L428.00 378.2 L428.25 377.6 L428.50 376.5 L428.75 376.7 L429.00 376.5 L429.25 378.1 L429.50 375.2 L429.75 378.2 L430.00 379.0 L430.25 375.6 L430.50 378.8 L430.75 379.4 L431.00 380.1 L431.25 380.8 L431.50 381.0 L431.75 380.1 L432.00 381.3 L432.25 380.9 L432.50 382.3 L432.75 382.2 L433.00 381.9 L433.25 381.2 L433.50 382.6 L433.75 382.0 L434.00 382.4 L434.25 380.5 L434.50 382.2 L434.75 381.7 L435.00 382.9 L435.25 384.6 L435.50 383.3 L435.75 382.5 L436.00 381.8 L436.25 381.5 L436.50 383.0 L436.75 385.5 L437.00 385.6 L437.25 381.7 L437.50 383.0 L437.75 384.2 L438.00 383.9 L438.25 383.6 L438.50 383.0 L438.75 383.4 L439.00 384.0 L439.25 386.3 L439.50 384.8 L439.75 384.6 L440.00 383.7 L440.25 386.9 L440.50 384.8 L440.75 386.3 L441.00 386.3 L441.25 387.2 L441.50 385.2 L441.75 385.2 L442.00 381.8 L442.25 384.4 L442.50 383.3 L442.75 385.4 L443.00 384.3 L443.25 383.3 L443.50 385.2 L443.75 383.8 L444.00 383.5 L444.25 383.8 L444.50 383.0 L444.75 384.1 L445.00 382.5 L445.25 382.3 L445.50 381.9 L445.75 382.9 L446.00 381.3 L446.25 380.1 L446.50 381.1 L446.75 380.7 L447.00 380.6 L447.25 381.4 L447.50 381.4 L447.75 376.6 L448.00 379.9 L448.25 380.0 L448.50 379.6 L448.75 380.4 L449.00 380.7 L449.25 378.7 L449.50 381.0 L449.75 381.1 L450.00 380.9 L450.25 381.6 L450.50 381.8 L450.75 382.5 L451.00 383.6 L451.25 382.6 L451.50 383.3 L451.75 384.1 L452.00 384.1 L452.25 382.4 L452.50 388.4 L452.75 383.3 L453.00 383.0 L453.25 383.0 L453.50 383.7 L453.75 383.4 L454.00 385.1 L454.25 386.0 L454.50 385.2 L454.75 385.5 L455.00 384.3 L455.25 382.8 L455.50 383.1 L455.75 385.4 L456.00 384.2 L456.25 387.2 L456.50 386.8 L456.75 386.7 L457.00 385.5 L457.25 384.6 L457.50 385.3 L457.75 386.3 L458.00 385.1 L458.25 384.5 L458.50 384.6 L458.75 383.5 L459.00 386.7 L459.25 386.3 L459.50 384.2 L459.75 387.6 L460.00 387.5 L460.25 384.9 L460.50 385.0 L460.75 385.3 L461.00 385.7 L461.25 384.8 L461.50 383.6 L461.75 382.6 L462.00 381.7 L462.25 383.9 L462.50 382.9 L462.75 382.8 L463.00 383.7 L463.25 380.6 L463.50 383.3 L463.75 381.2 L464.00 381.3 L464.25 382.3 L464.50 381.4 L464.75 382.2 L465.00 384.3 L465.25 382.8 L465.50 384.0 L465.75 384.2 L466.00 382.4 L466.25 383.2 L466.50 382.9 L466.75 384.8 L467.00 383.5 L467.25 383.1 L467.50 383.2 L467.75 383.1 L468.00 383.8 L468.25 383.7 L468.50 383.7 L468.75 383.9 L469.00 382.8 L469.25 382.8 L469.50 383.5 L469.75 384.5 L470.00 383.1 L470.25 383.6 L470.50 385.5 L470.75 383.9 L471.00 381.9 L471.25 381.4 L471.50 381.9 L471.75 381.4 L472.00 382.7 L472.25 380.7 L472.50 380.4 L472.75 382.2 L473.00 382.9 L473.25 383.3 L473.50 381.0 L473.75 384.5 L474.00 382.2 L474.25 385.1 L474.50 382.9 L474.75 383.5 L475.00 381.8 L475.25 385.2 L475.50 384.6 L475.75 383.3 L476.00 384.1 L476.25 383.4 L476.50 383.1 L476.75 384.6 L477.00 384.4 L477.25 385.6 L477.50 384.6 L477.75 386.3 L478.00 386.9 L478.25 385.8 L478.50 386.2 L478.75 385.5 L479.00 384.5 L479.25 385.6 L479.50 386.4 L479.75 386.0 L480.00 387.8 L480.25 386.5 L480.50 385.2 L480.75 388.4 L481.00 386.0 L481.25 388.5 L481.50 388.5 L481.75 387.2 L482.00 388.6 L482.25 388.2 L482.50 387.8 L482.75 389.6 L483.00 388.4 L483.25 389.1 L483.50 390.6 L483.75 388.7 L484.00 389.5 L484.25 389.2 L484.50 391.9 L484.75 390.1 L485.00 391.6 L485.25 391.2 L485.50 391.2 L485.75 391.5 L486.00 392.6 L486.25 391.9 L486.50 393.4 L486.75 392.9 L487.00 391.0 L487.25 392.8 L487.50 391.5 L487.75 391.4 L488.00 391.1 L488.25 391.2 L488.50 390.8 L488.75 390.3 L489.00 390.5 L489.25 391.4 L489.50 389.3 L489.75 389.4 L490.00 390.4 L490.25 386.1 L490.50 388.3 L490.75 389.0 L491.00 388.7 L491.25 387.6 L491.50 388.1 L491.75 388.2 L492.00 389.1 L492.25 386.1 L492.50 389.0 L492.75 388.4 L493.00 387.2 L493.25 386.4 L493.50 387.8 L493.75 388.2 L494.00 387.1 L494.25 386.0 L494.50 386.8 L494.75 386.2 L495.00 385.9 L495.25 384.2 L495.50 387.6 L495.75 385.6 L496.00 386.2 L496.25 386.1 L496.50 385.4 L496.75 385.2 L497.00 383.8 L497.25 380.4 L497.50 385.2 L497.75 385.4 L498.00 384.1 L498.25 386.5 L498.50 384.5 L498.75 384.8 L499.00 386.6 L499.25 383.0 L499.50 384.4 L499.75 385.1 L500.00 385.0 L500.25 384.4 L500.50 383.3 L500.75 384.9 L501.00 386.0 L501.25 384.9 L501.50 382.9 L501.75 381.4 L502.00 385.4 L502.25 387.2 L502.50 386.5 L502.75 386.6 L503.00 387.1 L503.25 386.8 L503.50 386.2 L503.75 387.4 L504.00 388.0 L504.25 385.6 L504.50 386.4 L504.75 385.4 L505.00 386.9 L505.25 385.1 L505.50 384.6 L505.75 384.3 L506.00 383.8 L506.25 379.6 L506.50 383.7 L506.75 383.2 L507.00 379.8 L507.25 382.6 L507.50 382.6 L507.75 382.0 L508.00 381.8 L508.25 381.9 L508.50 383.0 L508.75 380.8 L509.00 381.7 L509.25 381.6 L509.50 378.2 L509.75 380.1 L510.00 380.2 L510.25 379.8 L510.50 378.4 L510.75 378.8 L511.00 378.6 L511.25 377.5 L511.50 377.9 L511.75 377.2 L512.00 376.3 L512.25 377.7 L512.50 377.4 L512.75 375.9 L513.00 377.9 L513.25 377.3 L513.50 377.3 L513.75 379.5 L514.00 377.9 L514.25 379.3 L514.50 378.2 L514.75 379.0 L515.00 381.1 L515.25 380.6 L515.50 378.7 L515.75 382.8 L516.00 381.9 L516.25 383.5 L516.50 382.6 L516.75 382.7 L517.00 384.3 L517.25 384.8 L517.50 383.1 L517.75 383.5 L518.00 386.7 L518.25 383.0 L518.50 386.3 L518.75 385.2 L519.00 387.2 L519.25 383.5 L519.50 383.6 L519.75 387.6 L520.00 387.0 L520.25 387.1 L520.50 387.0 L520.75 390.2 L521.00 387.3 L521.25 387.9 L521.50 387.8 L521.75 388.2 L522.00 389.8 L522.25 387.1 L522.50 387.4 L522.75 387.4 L523.00 389.6 L523.25 387.3 L523.50 389.2 L523.75 387.4 L524.00 388.2 L524.25 387.0 L524.50 387.4 L524.75 386.7 L525.00 385.5 L525.25 385.4 L525.50 386.3 L525.75 385.9 L526.00 385.4 L526.25 384.1 L526.50 383.7 L526.75 384.2 L527.00 386.4 L527.25 383.7 L527.50 385.3 L527.75 386.5 L528.00 387.6 L528.25 385.8 L528.50 385.9 L528.75 386.9 L529.00 387.0 L529.25 387.1 L529.50 385.7 L529.75 385.9 L530.00 387.6 L530.25 386.3 L530.50 388.7 L530.75 388.2 L531.00 388.0 L531.25 388.6 L531.50 388.1 L531.75 389.2 L532.00 388.0 L532.25 389.7 L532.50 388.9 L532.75 388.2 L533.00 390.6 L533.25 388.0 L533.50 389.8 L533.75 389.6 L534.00 390.0 L534.25 388.2 L534.50 389.6 L534.75 389.3 L535.00 388.3 L535.25 388.9 L535.50 388.9 L535.75 388.3 L536.00 385.2 L536.25 387.0 L536.50 386.9 L536.75 386.2 L537.00 385.7 L537.25 386.0 L537.50 384.2 L537.75 384.5 L538.00 384.8 L538.25 383.5 L538.50 384.8 L538.75 384.0 L539.00 384.3 L539.25 384.0 L539.50 383.4 L539.75 382.7 L540.00 383.6 L540.25 383.3 L540.50 382.5 L540.75 381.6 L541.00 381.4 L541.25 381.2 L541.50 382.2 L541.75 381.9 L542.00 381.7 L542.25 381.5 L542.50 385.3 L542.75 381.3 L543.00 381.9 L543.25 381.9 L543.50 380.5 L543.75 382.8 L544.00 382.8 L544.25 381.8 L544.50 382.7 L544.75 382.7 L545.00 382.4 L545.25 382.9 L545.50 382.9 L545.75 381.7 L546.00 383.5 L546.25 384.2 L546.50 382.8 L546.75 383.0 L547.00 382.7 L547.25 382.5 L547.50 382.5 L547.75 382.3 L548.00 381.1 L548.25 382.4 L548.50 381.9 L548.75 382.2 L549.00 382.3 L549.25 382.3 L549.50 381.9 L549.75 381.4 L550.00 380.1 L550.25 380.7 L550.50 381.3 L550.75 377.5 L551.00 378.4 L551.25 378.2 L551.50 378.2 L551.75 377.0 L552.00 377.0 L552.25 375.1 L552.50 376.1 L552.75 374.4 L553.00 375.6 L553.25 376.7 L553.50 377.2 L553.75 373.9 L554.00 376.1 L554.25 374.4 L554.50 375.0 L554.75 375.6 L555.00 374.7 L555.25 374.4 L555.50 373.3 L555.75 377.2 L556.00 374.7 L556.25 372.2 L556.50 373.3 L556.75 376.4 L557.00 375.5 L557.25 374.3 L557.50 374.6 L557.75 373.8 L558.00 373.9 L558.25 374.9 L558.50 375.3 L558.75 374.8 L559.00 374.2 L559.25 374.5 L559.50 374.9 L559.75 376.5 L560.00 375.0 L560.25 377.3 L560.50 376.0 L560.75 375.1 L561.00 375.8 L561.25 377.3 L561.50 375.0 L561.75 375.5 L562.00 376.2 L562.25 376.0 L562.50 372.7 L562.75 374.9 L563.00 376.0 L563.25 376.0 L563.50 376.6 L563.75 376.3 L564.00 377.1 L564.25 371.3 L564.50 376.2 L564.75 375.5 L565.00 375.1 L565.25 376.3 L565.50 375.7 L565.75 375.4 L566.00 374.2 L566.25 374.1 L566.50 374.9 L566.75 374.1 L567.00 376.0 L567.25 374.4 L567.50 374.5 L567.75 374.0 L568.00 375.3 L568.25 373.2 L568.50 375.2 L568.75 376.0 L569.00 374.7 L569.25 375.0 L569.50 375.0 L569.75 375.0 L570.00 374.1 L570.25 374.0 L570.50 370.8 L570.75 374.1 L571.00 373.5 L571.25 373.3 L571.50 374.5 L571.75 375.0 L572.00 374.6 L572.25 374.9 L572.50 373.9 L572.75 372.2 L573.00 373.9 L573.25 375.8 L573.50 374.8 L573.75 374.7 L574.00 376.3 L574.25 373.9 L574.50 375.5 L574.75 375.5 L575.00 374.6 L575.25 373.8 L575.50 375.7 L575.75 375.3 L576.00 374.6 L576.25 374.4 L576.50 375.0 L576.75 374.2 L577.00 378.0 L577.25 375.6 L577.50 375.6 L577.75 375.7 L578.00 377.5 L578.25 377.8 L578.50 377.9 L578.75 378.1 L579.00 378.7 L579.25 375.4 L579.50 379.3 L579.75 378.8 L580.00 378.9 L580.25 379.9 L580.50 379.3 L580.75 378.7 L581.00 379.1 L581.25 379.4 L581.50 379.3 L581.75 378.6 L582.00 380.1 L582.25 378.1 L582.50 379.8 L582.75 378.0 L583.00 380.2 L583.25 382.0 L583.50 378.7 L583.75 377.2 L584.00 379.3 L584.25 377.8 L584.50 379.5 L584.75 379.5 L585.00 376.1 L585.25 378.7 L585.50 380.3 L585.75 377.9 L586.00 378.7 L586.25 379.8 L586.50 379.4 L586.75 381.1 L587.00 380.2 L587.25 378.1 L587.50 379.9 L587.75 376.4 L588.00 379.2 L588.25 378.2 L588.50 379.1 L588.75 378.4 L589.00 379.1 L589.25 377.9 L589.50 379.0 L589.75 378.2 L590.00 381.4 L590.25 377.2 L590.50 376.9 L590.75 378.6 L591.00 378.0 L591.25 378.4 L591.50 378.2 L591.75 377.8 L592.00 377.6 L592.25 377.8 L592.50 377.4 L592.75 378.6 L593.00 378.5 L593.25 376.8 L593.50 378.2 L593.75 376.1 L594.00 374.8 L594.25 375.4 L594.50 377.2 L594.75 377.5 L595.00 377.9 L595.25 378.8 L595.50 378.6 L595.75 376.9 L596.00 377.8 L596.25 378.0 L596.50 378.5 L596.75 379.0 L597.00 379.7 L597.25 379.5 L597.50 377.2 L597.75 380.3 L598.00 378.6 L598.25 378.7 L598.50 380.2 L598.75 379.1 L599.00 379.3 L599.25 379.3 L599.50 378.3 L599.75 380.8 L600.00 381.0 L600.25 380.0 L600.50 379.7 L600.75 380.0 L601.00 381.7 L601.25 379.4 L601.50 380.7 L601.75 381.6 L602.00 378.4 L602.25 381.7 L602.50 380.8 L602.75 382.1 L603.00 381.3 L603.25 381.4 L603.50 381.5 L603.75 381.0 L604.00 382.3 L604.25 383.0 L604.50 380.8 L604.75 381.5 L605.00 382.2 L605.25 381.9 L605.50 384.8 L605.75 383.6 L606.00 384.5 L606.25 383.9 L606.50 382.2 L606.75 383.9 L607.00 383.8 L607.25 383.2 L607.50 383.0 L607.75 384.9 L608.00 384.5 L608.25 385.0 L608.50 384.2 L608.75 385.0 L609.00 386.3 L609.25 385.3 L609.50 386.1 L609.75 387.1 L610.00 387.5 L610.25 387.1 L610.50 386.2 L610.75 387.8 L611.00 386.8 L611.25 387.8 L611.50 389.5 L611.75 387.0 L612.00 384.7 L612.25 383.8 L612.50 384.2 L612.75 384.8 L613.00 383.4 L613.25 381.9 L613.50 381.6 L613.75 379.3 L614.00 380.7 L614.25 378.4 L614.50 379.4 L614.75 382.7 L615.00 377.7 L615.25 381.7 L615.50 377.9 L615.75 379.0 L616.00 379.2 L616.25 378.5 L616.50 378.0 L616.75 381.0 L617.00 378.8 L617.25 381.3 L617.50 380.6 L617.75 380.2 L618.00 380.7 L618.25 381.0 L618.50 380.5 L618.75 379.4 L619.00 379.1 L619.25 380.2 L619.50 380.1 L619.75 380.8 L620.00 380.1 L620.25 380.5 L620.50 375.9 L620.75 381.6 L621.00 379.4 L621.25 379.3 L621.50 378.4 L621.75 378.4 L622.00 380.1 L622.25 378.8 L622.50 379.1 L622.75 381.1 L623.00 378.8 L623.25 378.8 L623.50 378.2 L623.75 377.7 L624.00 378.8 L624.25 377.9 L624.50 375.8 L624.75 378.0 L625.00 375.5 L625.25 378.9 L625.50 377.4 L625.75 377.9 L626.00 378.4 L626.25 378.6 L626.50 378.9 L626.75 379.3 L627.00 379.0 L627.25 378.9 L627.50 382.3 L627.75 379.9 L628.00 380.4 L628.25 381.8 L628.50 381.7 L628.75 380.1 L629.00 381.6 L629.25 381.5 L629.50 382.1 L629.75 382.1 L630.00 382.0 L630.25 384.2 L630.50 382.1 L630.75 381.5 L631.00 382.9 L631.25 381.2 L631.50 383.1 L631.75 382.5 L632.00 382.9 L632.25 382.7 L632.50 381.3 L632.75 382.7 L633.00 379.7 L633.25 381.1 L633.50 380.8 L633.75 381.8 L634.00 381.8 L634.25 380.7 L634.50 380.7 L634.75 379.5 L635.00 381.4 L635.25 380.0 L635.50 381.1 L635.75 381.4 L636.00 379.0 L636.25 380.1 L636.50 380.1 L636.75 383.0 L637.00 382.1 L637.25 381.6 L637.50 379.4 L637.75 379.9 L638.00 381.7 L638.25 380.1 L638.50 381.3 L638.75 380.0 L639.00 382.4 L639.25 383.2 L639.50 381.7 L639.75 382.4 L640.00 382.5 L640.25 381.8 L640.50 380.9 L640.75 382.7 L641.00 381.0 L641.25 382.5 L641.50 381.0 L641.75 382.9 L642.00 382.3 L642.25 382.8 L642.50 381.4 L642.75 383.9 L643.00 380.2 L643.25 382.7 L643.50 379.9 L643.75 382.5 L644.00 383.4 L644.25 383.4 L644.50 382.3 L644.75 383.2 L645.00 384.1 L645.25 385.0 L645.50 384.8 L645.75 383.7 L646.00 385.5 L646.25 383.8 L646.50 385.3 L646.75 386.9 L647.00 385.1 L647.25 385.4 L647.50 384.3 L647.75 383.2 L648.00 385.1 L648.25 384.3 L648.50 383.6 L648.75 383.8 L649.00 383.5 L649.25 384.0 L649.50 383.0 L649.75 382.3 L650.00 381.5 L650.25 380.4 L650.50 380.3 L650.75 380.2 L651.00 380.4 L651.25 379.0 L651.50 377.6 L651.75 377.6 L652.00 377.7 L652.25 379.2 L652.50 377.0 L652.75 377.6 L653.00 379.9 L653.25 376.3 L653.50 376.9 L653.75 376.8 L654.00 376.0 L654.25 378.8 L654.50 377.6 L654.75 377.8 L655.00 378.0 L655.25 378.4 L655.50 374.3 L655.75 378.2 L656.00 377.7 L656.25 377.6 L656.50 377.9 L656.75 376.0 L657.00 377.5 L657.25 377.9 L657.50 380.4 L657.75 376.5 L658.00 377.8 L658.25 379.4 L658.50 379.1 L658.75 378.4 L659.00 376.4 L659.25 378.1 L659.50 378.0 L659.75 377.4 L660.00 376.6 L660.25 376.9 L660.50 377.3 L660.75 375.7 L661.00 377.6 L661.25 377.4 L661.50 377.6 L661.75 378.1 L662.00 377.1 L662.25 378.1 L662.50 376.7 L662.75 375.8 L663.00 376.3 L663.25 376.7 L663.50 379.4 L663.75 376.1 L664.00 376.9 L664.25 376.9 L664.50 376.9 L664.75 376.2 L665.00 376.8 L665.25 377.5 L665.50 375.6 L665.75 378.1 L666.00 376.7 L666.25 376.7 L666.50 375.5 L666.75 372.6 L667.00 375.5 L667.25 375.9 L667.50 374.7 L667.75 376.5 L668.00 374.9 L668.25 374.9 L668.50 374.6 L668.75 375.5 L669.00 375.3 L669.25 375.8 L669.50 375.5 L669.75 375.9 L670.00 375.1 L670.25 376.6 L670.50 373.6 L670.75 374.8 L671.00 376.0 L671.25 374.0 L671.50 376.1 L671.75 377.2 L672.00 373.3 L672.25 374.9 L672.50 376.0 L672.75 376.1 L673.00 376.7 L673.25 376.2 L673.50 375.2 L673.75 376.4 L674.00 376.7 L674.25 375.0 L674.50 375.8 L674.75 375.4 L675.00 374.9 L675.25 374.0 L675.50 374.9 L675.75 375.2 L676.00 376.2 L676.25 372.6 L676.50 372.3 L676.75 375.5 L677.00 373.3 L677.25 374.8 L677.50 373.7 L677.75 375.6 L678.00 373.7 L678.25 372.4 L678.50 371.0 L678.75 375.4 L679.00 374.2 L679.25 372.7 L679.50 373.8 L679.75 373.0 L680.00 374.6 L680.25 372.0 L680.50 373.5 L680.75 372.0 L681.00 372.2 L681.25 372.7 L681.50 371.3 L681.75 375.0 L682.00 372.3 L682.25 370.4 L682.50 371.9 L682.75 371.8 L683.00 370.5 L683.25 370.8 L683.50 370.8 L683.75 369.4 L684.00 371.3 L684.25 369.0 L684.50 369.0 L684.75 370.6 L685.00 370.8 L685.25 371.6 L685.50 371.3 L685.75 370.6 L686.00 370.0 L686.25 369.7 L686.50 369.7 L686.75 369.6 L687.00 369.0 L687.25 373.2 L687.50 369.8 L687.75 369.9 L688.00 370.7 L688.25 370.0 L688.50 370.2 L688.75 368.6 L689.00 369.3 L689.25 371.7 L689.50 373.1 L689.75 369.6 L690.00 369.7 L690.25 369.0 L690.50 369.1 L690.75 370.1 L691.00 370.7 L691.25 372.1 L691.50 369.5 L691.75 369.7 L692.00 371.3 L692.25 370.3 L692.50 369.8 L692.75 370.5 L693.00 370.3 L693.25 371.6 L693.50 370.4 L693.75 371.2 L694.00 370.1 L694.25 371.3 L694.50 369.4 L694.75 371.5 L695.00 371.7 L695.25 371.3 L695.50 370.7 L695.75 370.3 L696.00 371.9 L696.25 372.5 L696.50 371.1 L696.75 371.0 L697.00 370.7 L697.25 371.4 L697.50 370.3 L697.75 371.7 L698.00 371.1 L698.25 370.6 L698.50 371.1 L698.75 371.5 L699.00 370.4 L699.25 371.3 L699.50 373.6 L699.75 371.7 L700.00 371.9 L700.25 372.0 L700.50 372.2 L700.75 371.6 L701.00 370.3 L701.25 371.5 L701.50 372.1 L701.75 371.6 L702.00 375.8 L702.25 372.3 L702.50 374.3 L702.75 373.1 L703.00 372.6 L703.25 372.4 L703.50 373.8 L703.75 375.4 L704.00 373.2 L704.25 373.3 L704.50 372.6 L704.75 375.5 L705.00 371.8 L705.25 372.0 L705.50 371.8 L705.75 373.9 L706.00 372.7 L706.25 373.0 L706.50 370.4 L706.75 372.5 L707.00 371.0 L707.25 374.8 L707.50 371.9 L707.75 372.0 L708.00 371.7 L708.25 371.9 L708.50 371.1 L708.75 370.2 L709.00 370.1 L709.25 371.0 L709.50 369.5 L709.75 370.0 L710.00 369.9 L710.25 368.7 L710.50 368.7 L710.75 370.6 L711.00 367.2 L711.25 368.1 L711.50 368.5 L711.75 368.2 L712.00 366.8 L712.25 368.7 L712.50 368.5 L712.75 367.7 L713.00 367.4 L713.25 369.0 L713.50 368.9 L713.75 368.4 L714.00 366.9 L714.25 367.0 L714.50 369.2 L714.75 368.9 L715.00 368.6 L715.25 366.9 L715.50 369.5 L715.75 366.0 L716.00 368.8 L716.25 368.3 L716.50 369.6 L716.75 366.5 L717.00 369.0 L717.25 370.9 L717.50 367.7 L717.75 368.8 L718.00 369.8 L718.25 371.6 L718.50 371.8 L718.75 369.8 L719.00 370.4 L719.25 369.0 L719.50 370.7 L719.75 370.5 L720.00 370.1 L720.25 369.6 L720.50 368.4 L720.75 370.2 L721.00 368.2 L721.25 369.9 L721.50 368.7 L721.75 368.1 L722.00 368.8 L722.25 370.7 L722.50 369.1 L722.75 369.6 L723.00 372.0 L723.25 368.2 L723.50 369.4 L723.75 371.6 L724.00 369.6 L724.25 369.8 L724.50 370.9 L724.75 373.0 L725.00 371.1 L725.25 374.3 L725.50 371.9 L725.75 370.4 L726.00 373.3 L726.25 372.7 L726.50 374.8 L726.75 375.0 L727.00 375.7 L727.25 374.6 L727.50 373.6 L727.75 375.2 L728.00 373.9 L728.25 374.6 L728.50 374.2 L728.75 375.2 L729.00 373.9 L729.25 373.7 L729.50 377.3 L729.75 375.7 L730.00 375.8 L730.25 376.1 L730.50 375.0 L730.75 375.2 L731.00 374.0 L731.25 375.4 L731.50 376.5 L731.75 375.5 L732.00 377.9 L732.25 376.9 L732.50 376.2 L732.75 376.3 L733.00 376.5 L733.25 376.9 L733.50 377.4 L733.75 377.5 L734.00 378.6 L734.25 379.0 L734.50 375.2 L734.75 379.8 L735.00 378.2 L735.25 378.8 L735.50 378.2 L735.75 378.6 L736.00 378.8 L736.25 381.5 L736.50 379.3 L736.75 380.4 L737.00 379.9 L737.25 378.4 L737.50 378.2 L737.75 379.0 L738.00 377.3 L738.25 379.8 L738.50 380.8 L738.75 376.8 L739.00 378.8 L739.25 377.0 L739.50 377.0 L739.75 376.6 L740.00 378.1 L740.25 377.1 L740.50 377.8 L740.75 378.2 L741.00 376.9 L741.25 376.6 L741.50 376.6 L741.75 376.3 L742.00 375.6 L742.25 376.7 L742.50 375.8 L742.75 374.4 L743.00 374.9 L743.25 375.2 L743.50 375.5 L743.75 372.1 L744.00 374.7 L744.25 375.9 L744.50 375.1 L744.75 372.4 L745.00 373.0 L745.25 373.7 L745.50 374.3 L745.75 371.7 L746.00 373.6 L746.25 373.7 L746.50 372.9 L746.75 372.4 L747.00 372.2 L747.25 370.7 L747.50 373.1 L747.75 371.5 L748.00 369.0 L748.25 370.3 L748.50 370.3 L748.75 368.8 L749.00 367.8 L749.25 368.6 L749.50 367.4 L749.75 367.8 L750.00 368.9 L750.25 367.6 L750.50 366.5 L750.75 366.5 L751.00 367.9 L751.25 368.1 L751.50 367.1 L751.75 367.9 L752.00 367.8 L752.25 366.3 L752.50 367.9 L752.75 371.1 L753.00 368.4 L753.25 367.9 L753.50 367.7 L753.75 368.5 L754.00 366.9 L754.25 368.2 L754.50 367.7 L754.75 367.5 L755.00 367.4 L755.25 366.8 L755.50 367.8 L755.75 367.6 L756.00 367.9 L756.25 368.2 L756.50 369.2 L756.75 371.8 L757.00 367.9 L757.25 368.3 L757.50 369.2 L757.75 368.7 L758.00 368.2 L758.25 365.7 L758.50 369.1 L758.75 365.2 L759.00 369.6 L759.25 367.2 L759.50 368.3 L759.75 368.9 L760.00 369.9 L760.25 368.4 L760.50 367.6 L760.75 368.8 L761.00 368.2 L761.25 368.0 L761.50 370.3 L761.75 369.1 L762.00 369.4 L762.25 368.3 L762.50 371.3 L762.75 368.0 L763.00 367.8 L763.25 368.0 L763.50 367.6 L763.75 367.4 L764.00 365.9 L764.25 366.7 L764.50 368.3 L764.75 367.3 L765.00 368.1 L765.25 366.4 L765.50 365.1 L765.75 369.0 L766.00 365.6 L766.25 364.4 L766.50 366.0 L766.75 366.0 L767.00 365.2 L767.25 363.6 L767.50 364.4 L767.75 364.2 L768.00 365.1 L768.25 364.7 L768.50 364.5 L768.75 364.5 L769.00 363.3 L769.25 364.1 L769.50 363.5 L769.75 361.0 L770.00 364.4 L770.25 364.3 L770.50 366.1 L770.75 365.1 L771.00 365.0 L771.25 364.4 L771.50 366.2 L771.75 365.8 L772.00 368.4 L772.25 367.4 L772.50 367.4 L772.75 368.1 L773.00 370.0 L773.25 367.4 L773.50 367.8 L773.75 367.4 L774.00 367.0 L774.25 369.3 L774.50 368.5 L774.75 368.9 L775.00 371.6 L775.25 370.3 L775.50 371.2 L775.75 370.7 L776.00 370.3 L776.25 369.7 L776.50 372.1 L776.75 372.1 L777.00 371.8 L777.25 371.9 L777.50 372.8 L777.75 373.0 L778.00 372.2 L778.25 372.1 L778.50 371.4 L778.75 371.6 L779.00 370.9 L779.25 373.2 L779.50 371.1 L779.75 372.0 L780.00 371.0" stroke="#139fff" stroke-width="1.25"/>
<path d="M49.50 344.0 L49.75 344.0 L50.00 344.0 L50.25 344.2 L50.50 344.7 L50.75 344.6 L51.00 344.2 L51.25 345.2 L51.50 344.3 L51.75 344.3 L52.00 345.5 L52.25 345.4 L52.50 345.8 L52.75 346.1 L53.00 346.4 L53.25 347.2 L53.50 346.1 L53.75 346.5 L54.00 346.4 L54.25 346.1 L54.50 346.5 L54.75 347.6 L55.00 347.7 L55.25 349.0 L55.50 348.0 L55.75 347.5 L56.00 347.1 L56.25 349.4 L56.50 350.1 L56.75 349.2 L57.00 349.5 L57.25 348.4 L57.50 348.1 L57.75 348.5 L58.00 347.8 L58.25 349.3 L58.50 347.4 L58.75 346.9 L59.00 350.7 L59.25 350.2 L59.50 348.7 L59.75 349.4 L60.00 347.8 L60.25 350.7 L60.50 349.0 L60.75 350.0 L61.00 348.3 L61.25 349.3 L61.50 349.4 L61.75 350.3 L62.00 349.9 L62.25 349.9 L62.50 350.0 L62.75 350.7 L63.00 350.1 L63.25 350.8 L63.50 349.6 L63.75 349.3 L64.00 351.8 L64.25 350.3 L64.50 350.4 L64.75 352.3 L65.00 353.2 L65.25 352.6 L65.50 354.1 L65.75 354.4 L66.00 353.9 L66.25 353.8 L66.50 352.4 L66.75 352.0 L67.00 354.3 L67.25 354.1 L67.50 353.0 L67.75 353.5 L68.00 351.9 L68.25 353.7 L68.50 354.6 L68.75 353.9 L69.00 354.4 L69.25 353.9 L69.50 355.6 L69.75 354.4 L70.00 355.8 L70.25 357.0 L70.50 354.9 L70.75 355.4 L71.00 356.8 L71.25 357.9 L71.50 355.7 L71.75 357.2 L72.00 356.5 L72.25 357.2 L72.50 357.6 L72.75 355.7 L73.00 357.3 L73.25 357.1 L73.50 354.3 L73.75 360.4 L74.00 358.0 L74.25 357.5 L74.50 356.8 L74.75 355.7 L75.00 355.9 L75.25 358.1 L75.50 354.8 L75.75 358.1 L76.00 357.5 L76.25 357.8 L76.50 358.8 L76.75 359.5 L77.00 357.8 L77.25 357.0 L77.50 360.0 L77.75 359.1 L78.00 360.0 L78.25 360.8 L78.50 359.9 L78.75 360.4 L79.00 361.8 L79.25 360.9 L79.50 361.9 L79.75 360.4 L80.00 362.8 L80.25 360.3 L80.50 360.4 L80.75 359.6 L81.00 360.1 L81.25 359.9 L81.50 357.9 L81.75 359.4 L82.00 359.1 L82.25 359.0 L82.50 360.4 L82.75 358.7 L83.00 359.4 L83.25 357.7 L83.50 356.2 L83.75 358.0 L84.00 356.5 L84.25 358.2 L84.50 359.2 L84.75 358.5 L85.00 358.5 L85.25 359.8 L85.50 359.7 L85.75 360.4 L86.00 361.1 L86.25 359.6 L86.50 360.9 L86.75 361.0 L87.00 360.6 L87.25 359.8 L87.50 359.4 L87.75 357.4 L88.00 360.0 L88.25 360.5 L88.50 358.8 L88.75 360.6 L89.00 359.6 L89.25 362.4 L89.50 360.4 L89.75 362.0 L90.00 360.7 L90.25 359.9 L90.50 361.0 L90.75 359.1 L91.00 359.1 L91.25 360.0 L91.50 359.9 L91.75 361.8 L92.00 360.2 L92.25 360.4 L92.50 359.8 L92.75 360.2 L93.00 363.8 L93.25 361.4 L93.50 361.3 L93.75 361.6 L94.00 362.8 L94.25 362.2 L94.50 361.9 L94.75 362.1 L95.00 362.9 L95.25 362.9 L95.50 364.0 L95.75 364.1 L96.00 363.7 L96.25 364.7 L96.50 364.3 L96.75 364.3 L97.00 366.4 L97.25 365.8 L97.50 366.9 L97.75 368.4 L98.00 369.4 L98.25 369.6 L98.50 368.8 L98.75 368.3 L99.00 369.3 L99.25 366.2 L99.50 368.1 L99.75 369.3 L100.00 368.8 L100.25 369.5 L100.50 370.0 L100.75 370.4 L101.00 370.1 L101.25 374.4 L101.50 372.4 L101.75 373.0 L102.00 372.2 L102.25 372.7 L102.50 374.4 L102.75 375.4 L103.00 374.4 L103.25 373.3 L103.50 374.8 L103.75 375.2 L104.00 375.1 L104.25 376.4 L104.50 378.1 L104.75 376.5 L105.00 379.1 L105.25 378.3 L105.50 379.9 L105.75 382.2 L106.00 378.7 L106.25 377.8 L106.50 381.8 L106.75 380.7 L107.00 379.8 L107.25 381.2 L107.50 381.8 L107.75 382.6 L108.00 383.1 L108.25 384.5 L108.50 382.7 L108.75 384.4 L109.00 383.0 L109.25 383.4 L109.50 384.5 L109.75 386.2 L110.00 385.3 L110.25 385.3 L110.50 385.0 L110.75 384.5 L111.00 385.0 L111.25 386.5 L111.50 387.3 L111.75 391.1 L112.00 384.1 L112.25 387.0 L112.50 388.7 L112.75 385.6 L113.00 386.3 L113.25 385.3 L113.50 385.3 L113.75 385.0 L114.00 383.4 L114.25 385.0 L114.50 386.0 L114.75 384.0 L115.00 383.4 L115.25 384.3 L115.50 383.2 L115.75 384.0 L116.00 383.1 L116.25 382.9 L116.50 383.3 L116.75 382.6 L117.00 383.3 L117.25 381.0 L117.50 382.6 L117.75 381.5 L118.00 381.8 L118.25 380.5 L118.50 384.6 L118.75 380.4 L119.00 382.9 L119.25 381.5 L119.50 379.7 L119.75 382.0 L120.00 382.8 L120.25 383.9 L120.50 383.0 L120.75 384.2 L121.00 385.1 L121.25 385.4 L121.50 385.3 L121.75 384.1 L122.00 385.5 L122.25 384.9 L122.50 386.6 L122.75 387.3 L123.00 389.2 L123.25 386.2 L123.50 387.1 L123.75 387.8 L124.00 386.6 L124.25 387.2 L124.50 388.2 L124.75 386.3 L125.00 387.3 L125.25 389.3 L125.50 389.6 L125.75 386.7 L126.00 389.2 L126.25 387.7 L126.50 391.4 L126.75 390.6 L127.00 389.0 L127.25 390.4 L127.50 391.8 L127.75 392.5 L128.00 390.3 L128.25 389.4 L128.50 391.3 L128.75 391.5 L129.00 393.2 L129.25 392.4 L129.50 391.4 L129.75 392.4 L130.00 392.2 L130.25 395.2 L130.50 393.4 L130.75 393.6 L131.00 393.8 L131.25 394.9 L131.50 396.4 L131.75 394.5 L132.00 396.0 L132.25 395.4 L132.50 395.4 L132.75 397.1 L133.00 396.8 L133.25 396.3 L133.50 396.5 L133.75 397.4 L134.00 396.4 L134.25 397.9 L134.50 395.5 L134.75 395.9 L135.00 396.1 L135.25 394.7 L135.50 393.7 L135.75 395.3 L136.00 394.0 L136.25 394.8 L136.50 394.5 L136.75 394.2 L137.00 395.0 L137.25 392.8 L137.50 393.3 L137.75 394.1 L138.00 395.2 L138.25 394.4 L138.50 396.1 L138.75 395.2 L139.00 395.9 L139.25 394.6 L139.50 395.8 L139.75 395.2 L140.00 396.1 L140.25 396.0 L140.50 396.2 L140.75 398.5 L141.00 397.5 L141.25 399.0 L141.50 396.5 L141.75 398.7 L142.00 399.8 L142.25 399.3 L142.50 398.9 L142.75 398.4 L143.00 398.9 L143.25 397.7 L143.50 398.5 L143.75 395.5 L144.00 398.5 L144.25 398.0 L144.50 397.4 L144.75 394.8 L145.00 396.4 L145.25 396.3 L145.50 395.9 L145.75 395.4 L146.00 394.1 L146.25 395.8 L146.50 394.8 L146.75 395.3 L147.00 393.7 L147.25 394.7 L147.50 394.6 L147.75 394.4 L148.00 391.6 L148.25 395.0 L148.50 394.2 L148.75 394.7 L149.00 393.0 L149.25 394.6 L149.50 395.3 L149.75 396.7 L150.00 396.4 L150.25 398.0 L150.50 397.1 L150.75 399.9 L151.00 398.5 L151.25 399.7 L151.50 397.7 L151.75 400.6 L152.00 403.8 L152.25 399.0 L152.50 399.4 L152.75 399.8 L153.00 400.3 L153.25 400.8 L153.50 400.9 L153.75 400.9 L154.00 400.9 L154.25 403.1 L154.50 400.9 L154.75 399.2 L155.00 400.5 L155.25 401.7 L155.50 402.3 L155.75 401.5 L156.00 401.7 L156.25 400.1 L156.50 400.9 L156.75 400.7 L157.00 401.1 L157.25 400.7 L157.50 405.3 L157.75 400.6 L158.00 399.2 L158.25 401.8 L158.50 400.6 L158.75 400.2 L159.00 399.7 L159.25 398.8 L159.50 399.2 L159.75 397.7 L160.00 398.2 L160.25 397.6 L160.50 398.3 L160.75 398.4 L161.00 398.4 L161.25 396.4 L161.50 399.8 L161.75 398.3 L162.00 397.5 L162.25 397.4 L162.50 398.6 L162.75 396.7 L163.00 397.1 L163.25 397.3 L163.50 399.9 L163.75 398.6 L164.00 399.7 L164.25 400.4 L164.50 399.9 L164.75 397.7 L165.00 398.6 L165.25 400.0 L165.50 399.6 L165.75 398.3 L166.00 399.1 L166.25 400.5 L166.50 402.8 L166.75 400.4 L167.00 399.3 L167.25 399.6 L167.50 400.7 L167.75 401.3 L168.00 401.7 L168.25 398.6 L168.50 401.6 L168.75 400.4 L169.00 401.3 L169.25 402.3 L169.50 404.4 L169.75 400.4 L170.00 403.6 L170.25 405.0 L170.50 403.1 L170.75 402.3 L171.00 403.3 L171.25 402.8 L171.50 403.0 L171.75 401.9 L172.00 400.3 L172.25 402.2 L172.50 398.9 L172.75 402.1 L173.00 402.0 L173.25 402.8 L173.50 405.4 L173.75 404.0 L174.00 401.6 L174.25 403.3 L174.50 402.3 L174.75 404.1 L175.00 404.4 L175.25 406.1 L175.50 406.6 L175.75 406.8 L176.00 406.7 L176.25 408.5 L176.50 409.4 L176.75 406.4 L177.00 407.7 L177.25 407.0 L177.50 409.0 L177.75 407.8 L178.00 407.3 L178.25 407.1 L178.50 406.6 L178.75 407.4 L179.00 407.1 L179.25 407.8 L179.50 407.1 L179.75 406.1 L180.00 405.1 L180.25 404.7 L180.50 406.0 L180.75 406.0 L181.00 405.0 L181.25 406.8 L181.50 405.6 L181.75 402.4 L182.00 405.6 L182.25 403.8 L182.50 405.9 L182.75 406.7 L183.00 405.7 L183.25 404.9 L183.50 407.2 L183.75 405.9 L184.00 407.1 L184.25 405.4 L184.50 405.2 L184.75 404.2 L185.00 405.2 L185.25 405.4 L185.50 404.5 L185.75 403.4 L186.00 404.1 L186.25 404.7 L186.50 405.1 L186.75 406.8 L187.00 405.9 L187.25 405.9 L187.50 406.2 L187.75 404.3 L188.00 407.3 L188.25 406.5 L188.50 406.3 L188.75 406.5 L189.00 406.1 L189.25 408.3 L189.50 406.9 L189.75 409.1 L190.00 409.0 L190.25 410.0 L190.50 408.9 L190.75 409.0 L191.00 406.5 L191.25 409.3 L191.50 411.4 L191.75 409.1 L192.00 407.7 L192.25 408.8 L192.50 408.8 L192.75 408.2 L193.00 411.3 L193.25 409.6 L193.50 410.5 L193.75 410.0 L194.00 410.3 L194.25 410.5 L194.50 409.0 L194.75 409.9 L195.00 410.8 L195.25 409.9 L195.50 408.6 L195.75 408.9 L196.00 409.6 L196.25 409.2 L196.50 409.0 L196.75 409.3 L197.00 409.7 L197.25 408.0 L197.50 408.2 L197.75 408.7 L198.00 408.5 L198.25 408.9 L198.50 409.7 L198.75 408.2 L199.00 407.8 L199.25 408.0 L199.50 408.2 L199.75 408.5 L200.00 405.4 L200.25 408.5 L200.50 408.2 L200.75 408.9 L201.00 408.7 L201.25 407.9 L201.50 408.7 L201.75 410.0 L202.00 410.5 L202.25 409.3 L202.50 408.4 L202.75 411.7 L203.00 410.5 L203.25 409.3 L203.50 408.8 L203.75 410.6 L204.00 409.8 L204.25 411.7 L204.50 410.5 L204.75 412.4 L205.00 410.6 L205.25 408.7 L205.50 410.8 L205.75 411.8 L206.00 414.2 L206.25 410.7 L206.50 411.7 L206.75 412.1 L207.00 411.5 L207.25 412.5 L207.50 411.6 L207.75 416.9 L208.00 410.9 L208.25 412.2 L208.50 411.6 L208.75 411.9 L209.00 411.4 L209.25 413.1 L209.50 412.9 L209.75 414.2 L210.00 412.3 L210.25 411.3 L210.50 412.3 L210.75 413.4 L211.00 411.9 L211.25 413.9 L211.50 413.1 L211.75 414.0 L212.00 411.9 L212.25 413.7 L212.50 412.0 L212.75 411.5 L213.00 413.0 L213.25 412.6 L213.50 413.0 L213.75 410.5 L214.00 411.5 L214.25 411.9 L214.50 411.3 L214.75 411.0 L215.00 412.8 L215.25 412.0 L215.50 412.2 L215.75 411.6 L216.00 412.7 L216.25 415.6 L216.50 410.9 L216.75 410.8 L217.00 411.4 L217.25 412.7 L217.50 414.1 L217.75 411.8 L218.00 412.3 L218.25 411.9 L218.50 411.1 L218.75 411.0 L219.00 411.3 L219.25 410.7 L219.50 413.8 L219.75 412.3 L220.00 410.8 L220.25 412.7 L220.50 411.5 L220.75 410.1 L221.00 413.1 L221.25 411.1 L221.50 412.2 L221.75 413.6 L222.00 413.2 L222.25 412.5 L222.50 413.8 L222.75 413.5 L223.00 412.1 L223.25 412.8 L223.50 413.1 L223.75 413.4 L224.00 411.6 L224.25 412.4 L224.50 413.4 L224.75 412.7 L225.00 412.3 L225.25 412.5 L225.50 414.3 L225.75 412.7 L226.00 412.8 L226.25 413.5 L226.50 413.3 L226.75 413.1 L227.00 414.0 L227.25 412.7 L227.50 414.8 L227.75 412.9 L228.00 412.5 L228.25 412.9 L228.50 413.4 L228.75 412.8 L229.00 410.2 L229.25 415.6 L229.50 410.0 L229.75 414.9 L230.00 412.7 L230.25 416.2 L230.50 414.2 L230.75 413.9 L231.00 413.1 L231.25 415.6 L231.50 412.6 L231.75 414.0 L232.00 413.2 L232.25 414.8 L232.50 414.8 L232.75 413.6 L233.00 412.0 L233.25 414.4 L233.50 414.1 L233.75 415.2 L234.00 416.3 L234.25 415.4 L234.50 416.3 L234.75 415.2 L235.00 415.7 L235.25 415.3 L235.50 415.8 L235.75 416.3 L236.00 415.5 L236.25 415.6 L236.50 416.2 L236.75 416.9 L237.00 414.4 L237.25 417.3 L237.50 416.1 L237.75 417.1 L238.00 415.3 L238.25 417.2 L238.50 416.5 L238.75 416.8 L239.00 415.2 L239.25 419.1 L239.50 418.6 L239.75 417.4 L240.00 417.3 L240.25 417.6 L240.50 413.2 L240.75 416.5 L241.00 416.9 L241.25 417.0 L241.50 415.4 L241.75 415.5 L242.00 414.7 L242.25 416.5 L242.50 415.1 L242.75 414.0 L243.00 413.5 L243.25 412.5 L243.50 414.2 L243.75 413.6 L244.00 412.6 L244.25 412.6 L244.50 414.9 L244.75 412.8 L245.00 414.6 L245.25 412.8 L245.50 413.7 L245.75 413.2 L246.00 413.6 L246.25 412.3 L246.50 413.0 L246.75 414.7 L247.00 412.3 L247.25 412.3 L247.50 411.4 L247.75 412.2 L248.00 411.6 L248.25 414.1 L248.50 411.7 L248.75 412.1 L249.00 414.0 L249.25 413.3 L249.50 410.7 L249.75 411.5 L250.00 412.6 L250.25 412.9 L250.50 412.3 L250.75 411.2 L251.00 411.4 L251.25 412.3 L251.50 413.3 L251.75 412.4 L252.00 412.0 L252.25 412.6 L252.50 412.7 L252.75 411.4 L253.00 412.3 L253.25 411.5 L253.50 412.9 L253.75 411.3 L254.00 412.1 L254.25 412.4 L254.50 411.0 L254.75 412.8 L255.00 412.3 L255.25 412.6 L255.50 413.6 L255.75 413.6 L256.00 412.3 L256.25 410.6 L256.50 414.2 L256.75 412.8 L257.00 414.5 L257.25 413.7 L257.50 413.2 L257.75 413.8 L258.00 413.1 L258.25 414.5 L258.50 415.8 L258.75 414.6 L259.00 416.6 L259.25 416.2 L259.50 416.7 L259.75 416.1 L260.00 417.8 L260.25 416.4 L260.50 418.3 L260.75 419.2 L261.00 418.2 L261.25 417.9 L261.50 421.3 L261.75 417.3 L262.00 418.6 L262.25 416.6 L262.50 417.7 L262.75 418.4 L263.00 419.5 L263.25 420.2 L263.50 420.0 L263.75 416.7 L264.00 419.8 L264.25 419.7 L264.50 416.7 L264.75 418.3 L265.00 414.8 L265.25 415.7 L265.50 416.0 L265.75 414.0 L266.00 414.4 L266.25 414.1 L266.50 414.4 L266.75 414.8 L267.00 413.8 L267.25 414.1 L267.50 414.1 L267.75 414.6 L268.00 415.6 L268.25 415.5 L268.50 413.6 L268.75 413.5 L269.00 414.1 L269.25 414.8 L269.50 416.3 L269.75 414.3 L270.00 414.7 L270.25 414.3 L270.50 414.7 L270.75 414.6 L271.00 414.8 L271.25 415.1 L271.50 415.8 L271.75 416.7 L272.00 415.7 L272.25 416.3 L272.50 416.7 L272.75 416.6 L273.00 416.7 L273.25 417.2 L273.50 417.2 L273.75 417.7 L274.00 419.0 L274.25 419.6 L274.50 419.6 L274.75 419.7 L275.00 420.8 L275.25 420.2 L275.50 419.2 L275.75 418.7 L276.00 420.5 L276.25 419.3 L276.50 417.5 L276.75 420.3 L277.00 418.1 L277.25 418.9 L277.50 418.5 L277.75 416.2 L278.00 417.7 L278.25 418.1 L278.50 419.1 L278.75 417.6 L279.00 418.2 L279.25 417.7 L279.50 412.5 L279.75 415.9 L280.00 415.8 L280.25 416.2 L280.50 416.7 L280.75 417.3 L281.00 415.8 L281.25 417.2 L281.50 418.2 L281.75 418.1 L282.00 417.0 L282.25 418.1 L282.50 417.0 L282.75 416.7 L283.00 412.5 L283.25 416.0 L283.50 416.8 L283.75 417.5 L284.00 417.3 L284.25 414.8 L284.50 417.7 L284.75 417.0 L285.00 416.6 L285.25 417.5 L285.50 416.2 L285.75 416.5 L286.00 417.0 L286.25 416.8 L286.50 418.2 L286.75 416.8 L287.00 417.7 L287.25 417.6 L287.50 417.7 L287.75 417.6 L288.00 418.0 L288.25 418.3 L288.50 419.7 L288.75 419.0 L289.00 420.4 L289.25 420.5 L289.50 419.7 L289.75 421.0 L290.00 420.5 L290.25 420.7 L290.50 420.3 L290.75 421.3 L291.00 421.5 L291.25 420.0 L291.50 421.6 L291.75 422.7 L292.00 420.7 L292.25 421.0 L292.50 422.0 L292.75 423.1 L293.00 423.0 L293.25 422.4 L293.50 421.5 L293.75 422.1 L294.00 421.9 L294.25 423.7 L294.50 422.8 L294.75 421.4 L295.00 420.6 L295.25 422.5 L295.50 423.3 L295.75 421.4 L296.00 420.9 L296.25 422.7 L296.50 422.0 L296.75 420.4 L297.00 421.4 L297.25 420.2 L297.50 421.6 L297.75 418.1 L298.00 422.1 L298.25 420.9 L298.50 422.2 L298.75 420.6 L299.00 420.2 L299.25 422.1 L299.50 421.1 L299.75 421.7 L300.00 422.8 L300.25 421.5 L300.50 422.3 L300.75 423.1 L301.00 424.5 L301.25 424.0 L301.50 424.3 L301.75 421.3 L302.00 425.6 L302.25 423.1 L302.50 422.6 L302.75 424.2 L303.00 422.8 L303.25 424.5 L303.50 423.2 L303.75 422.8 L304.00 421.4 L304.25 422.6 L304.50 422.9 L304.75 423.4 L305.00 423.2 L305.25 421.2 L305.50 422.3 L305.75 421.7 L306.00 420.7 L306.25 421.1 L306.50 419.1 L306.75 421.8 L307.00 418.9 L307.25 418.6 L307.50 419.8 L307.75 418.2 L308.00 419.4 L308.25 419.0 L308.50 414.5 L308.75 417.6 L309.00 414.9 L309.25 417.3 L309.50 416.9 L309.75 418.0 L310.00 415.7 L310.25 415.8 L310.50 416.0 L310.75 415.3 L311.00 413.8 L311.25 415.0 L311.50 415.1 L311.75 415.2 L312.00 415.2 L312.25 414.7 L312.50 417.2 L312.75 417.0 L313.00 415.2 L313.25 416.4 L313.50 414.4 L313.75 415.4 L314.00 416.7 L314.25 417.1 L314.50 416.2 L314.75 418.9 L315.00 415.5 L315.25 416.1 L315.50 417.7 L315.75 418.7 L316.00 417.3 L316.25 419.5 L316.50 417.6 L316.75 417.9 L317.00 417.9 L317.25 416.8 L317.50 415.9 L317.75 416.4 L318.00 417.5 L318.25 417.3 L318.50 416.2 L318.75 414.0 L319.00 416.3 L319.25 416.5 L319.50 415.3 L319.75 414.5 L320.00 414.8 L320.25 414.0 L320.50 412.6 L320.75 415.8 L321.00 413.6 L321.25 414.2 L321.50 414.1 L321.75 413.6 L322.00 413.8 L322.25 414.7 L322.50 414.6 L322.75 413.9 L323.00 414.1 L323.25 415.8 L323.50 413.5 L323.75 413.3 L324.00 413.7 L324.25 413.8 L324.50 412.5 L324.75 411.6 L325.00 410.2 L325.25 409.9 L325.50 409.9 L325.75 409.3 L326.00 409.4 L326.25 407.0 L326.50 411.6 L326.75 410.2 L327.00 407.7 L327.25 406.4 L327.50 408.3 L327.75 408.0 L328.00 406.7 L328.25 406.3 L328.50 408.7 L328.75 406.7 L329.00 405.1 L329.25 405.2 L329.50 406.4 L329.75 404.3 L330.00 405.8 L330.25 405.3 L330.50 404.8 L330.75 402.8 L331.00 403.3 L331.25 402.8 L331.50 401.6 L331.75 404.1 L332.00 403.4 L332.25 401.8 L332.50 400.2 L332.75 403.6 L333.00 400.8 L333.25 402.4 L333.50 401.4 L333.75 403.0 L334.00 404.3 L334.25 402.4 L334.50 405.6 L334.75 403.8 L335.00 405.4 L335.25 406.3 L335.50 405.8 L335.75 405.4 L336.00 405.5 L336.25 405.8 L336.50 407.1 L336.75 406.9 L337.00 406.9 L337.25 406.9 L337.50 407.7 L337.75 409.2 L338.00 409.5 L338.25 408.1 L338.50 409.3 L338.75 408.4 L339.00 412.8 L339.25 409.8 L339.50 409.0 L339.75 412.1 L340.00 409.4 L340.25 413.4 L340.50 410.3 L340.75 410.0 L341.00 410.1 L341.25 410.4 L341.50 408.1 L341.75 411.8 L342.00 412.1 L342.25 410.4 L342.50 411.2 L342.75 411.3 L343.00 411.1 L343.25 411.8 L343.50 411.7 L343.75 411.0 L344.00 411.2 L344.25 410.5 L344.50 410.9 L344.75 412.0 L345.00 415.0 L345.25 410.7 L345.50 410.2 L345.75 411.3 L346.00 410.9 L346.25 411.1 L346.50 409.0 L346.75 414.7 L347.00 413.5 L347.25 412.1 L347.50 412.6 L347.75 411.9 L348.00 413.7 L348.25 411.7 L348.50 411.7 L348.75 411.9 L349.00 411.1 L349.25 411.7 L349.50 411.2 L349.75 412.9 L350.00 411.5 L350.25 413.3 L350.50 412.6 L350.75 412.0 L351.00 412.0 L351.25 413.2 L351.50 413.5 L351.75 411.9 L352.00 413.0 L352.25 414.2 L352.50 411.7 L352.75 412.2 L353.00 412.8 L353.25 413.7 L353.50 413.3 L353.75 412.3 L354.00 412.8 L354.25 410.7 L354.50 411.3 L354.75 410.6 L355.00 410.4 L355.25 409.2 L355.50 411.1 L355.75 408.8 L356.00 408.6 L356.25 409.3 L356.50 407.4 L356.75 407.1 L357.00 408.1 L357.25 407.2 L357.50 407.6 L357.75 407.8 L358.00 404.6 L358.25 407.4 L358.50 408.3 L358.75 408.2 L359.00 406.6 L359.25 406.7 L359.50 404.8 L359.75 407.0 L360.00 406.2 L360.25 405.3 L360.50 404.2 L360.75 404.6 L361.00 404.0 L361.25 405.3 L361.50 406.6 L361.75 405.2 L362.00 404.8 L362.25 404.7 L362.50 405.3 L362.75 404.1 L363.00 406.4 L363.25 406.9 L363.50 406.0 L363.75 404.4 L364.00 405.6 L364.25 402.2 L364.50 405.4 L364.75 405.8 L365.00 404.9 L365.25 405.0 L365.50 407.4 L365.75 405.6 L366.00 406.7 L366.25 405.2 L366.50 405.2 L366.75 405.6 L367.00 405.6 L367.25 403.5 L367.50 405.4 L367.75 404.2 L368.00 404.4 L368.25 404.8 L368.50 403.0 L368.75 402.8 L369.00 406.2 L369.25 404.6 L369.50 402.9 L369.75 402.9 L370.00 403.3 L370.25 402.6 L370.50 402.4 L370.75 402.4 L371.00 402.6 L371.25 404.0 L371.50 403.1 L371.75 401.9 L372.00 402.1 L372.25 403.7 L372.50 401.4 L372.75 400.3 L373.00 399.6 L373.25 401.3 L373.50 401.6 L373.75 401.6 L374.00 400.3 L374.25 401.4 L374.50 400.3 L374.75 400.4 L375.00 399.3 L375.25 399.8 L375.50 401.0 L375.75 402.0 L376.00 399.4 L376.25 401.0 L376.50 400.1 L376.75 398.6 L377.00 401.7 L377.25 402.8 L377.50 398.3 L377.75 401.0 L378.00 400.2 L378.25 400.8 L378.50 401.8 L378.75 400.0 L379.00 403.2 L379.25 401.0 L379.50 403.3 L379.75 404.2 L380.00 403.9 L380.25 403.3 L380.50 403.2 L380.75 403.1 L381.00 408.1 L381.25 404.5 L381.50 402.5 L381.75 408.5 L382.00 404.8 L382.25 404.6 L382.50 404.6 L382.75 405.2 L383.00 405.0 L383.25 404.7 L383.50 404.1 L383.75 405.1 L384.00 404.9 L384.25 405.1 L384.50 405.4 L384.75 404.4 L385.00 406.4 L385.25 403.5 L385.50 403.7 L385.75 407.4 L386.00 406.6 L386.25 403.3 L386.50 403.5 L386.75 406.9 L387.00 406.1 L387.25 406.0 L387.50 405.1 L387.75 406.3 L388.00 406.2 L388.25 403.6 L388.50 404.0 L388.75 405.9 L389.00 405.1 L389.25 406.5 L389.50 403.0 L389.75 406.1 L390.00 403.2 L390.25 405.7 L390.50 403.0 L390.75 405.9 L391.00 405.0 L391.25 405.6 L391.50 405.1 L391.75 405.7 L392.00 404.3 L392.25 407.9 L392.50 406.2 L392.75 406.8 L393.00 405.4 L393.25 403.8 L393.50 403.6 L393.75 405.7 L394.00 404.8 L394.25 405.1 L394.50 406.2 L394.75 407.6 L395.00 406.2 L395.25 405.5 L395.50 405.9 L395.75 405.8 L396.00 407.3 L396.25 405.1 L396.50 405.0 L396.75 404.6 L397.00 402.8 L397.25 405.3 L397.50 403.4 L397.75 402.8 L398.00 402.4 L398.25 401.9 L398.50 403.3 L398.75 401.6 L399.00 403.4 L399.25 397.1 L399.50 401.9 L399.75 402.4 L400.00 400.9 L400.25 402.6 L400.50 402.5 L400.75 404.5 L401.00 402.4 L401.25 403.3 L401.50 404.0 L401.75 403.5 L402.00 403.4 L402.25 403.8 L402.50 402.9 L402.75 403.9 L403.00 405.5 L403.25 403.8 L403.50 403.0 L403.75 406.6 L404.00 405.3 L404.25 409.4 L404.50 406.0 L404.75 403.9 L405.00 405.5 L405.25 408.0 L405.50 407.2 L405.75 407.0 L406.00 407.3 L406.25 407.6 L406.50 407.2 L406.75 408.6 L407.00 407.9 L407.25 405.5 L407.50 407.7 L407.75 406.7 L408.00 408.0 L408.25 407.1 L408.50 406.2 L408.75 405.3 L409.00 405.1 L409.25 406.5 L409.50 406.7 L409.75 405.7 L410.00 405.3 L410.25 405.5 L410.50 404.2 L410.75 403.9 L411.00 403.2 L411.25 402.6 L411.50 404.8 L411.75 403.4 L412.00 403.4 L412.25 404.5 L412.50 403.4 L412.75 405.0 L413.00 403.3 L413.25 403.7 L413.50 401.5 L413.75 404.4 L414.00 403.4 L414.25 404.1 L414.50 403.8 L414.75 403.2 L415.00 403.6 L415.25 404.3 L415.50 403.2 L415.75 404.8 L416.00 403.5 L416.25 402.7 L416.50 405.0 L416.75 406.2 L417.00 402.1 L417.25 403.8 L417.50 403.6 L417.75 403.0 L418.00 404.1 L418.25 402.5 L418.50 403.7 L418.75 403.2 L419.00 401.7 L419.25 404.6 L419.50 404.5 L419.75 404.3 L420.00 400.9 L420.25 404.8 L420.50 403.3 L420.75 400.9 L421.00 403.5 L421.25 403.9 L421.50 403.9 L421.75 402.1 L422.00 405.1 L422.25 404.3 L422.50 403.5 L422.75 402.3 L423.00 403.2 L423.25 402.4 L423.50 402.3 L423.75 403.9 L424.00 403.6 L424.25 402.8 L424.50 405.9 L424.75 403.2 L425.00 402.8 L425.25 403.7 L425.50 402.1 L425.75 402.8 L426.00 403.8 L426.25 401.3 L426.50 402.5 L426.75 402.5 L427.00 401.1 L427.25 402.2 L427.50 402.0 L427.75 401.1 L428.00 402.2 L428.25 401.6 L428.50 400.5 L428.75 400.7 L429.00 400.5 L429.25 402.1 L429.50 399.2 L429.75 402.2 L430.00 403.0 L430.25 399.6 L430.50 402.8 L430.75 403.4 L431.00 404.1 L431.25 404.8 L431.50 405.0 L431.75 404.1 L432.00 405.3 L432.25 404.9 L432.50 406.3 L432.75 406.2 L433.00 405.9 L433.25 405.2 L433.50 406.6 L433.75 406.0 L434.00 406.4 L434.25 404.5 L434.50 406.2 L434.75 405.7 L435.00 406.9 L435.25 408.6 L435.50 407.3 L435.75 406.5 L436.00 405.8 L436.25 405.5 L436.50 407.0 L436.75 409.5 L437.00 409.6 L437.25 405.7 L437.50 407.0 L437.75 408.2 L438.00 407.9 L438.25 407.6 L438.50 407.0 L438.75 407.4 L439.00 408.0 L439.25 410.3 L439.50 408.8 L439.75 408.6 L440.00 407.7 L440.25 410.9 L440.50 408.8 L440.75 410.3 L441.00 410.3 L441.25 411.2 L441.50 409.2 L441.75 409.2 L442.00 405.8 L442.25 408.4 L442.50 407.3 L442.75 409.4 L443.00 408.3 L443.25 407.3 L443.50 409.2 L443.75 407.8 L444.00 407.5 L444.25 407.8 L444.50 407.0 L444.75 408.1 L445.00 406.5 L445.25 406.3 L445.50 405.9 L445.75 406.9 L446.00 405.3 L446.25 404.1 L446.50 405.1 L446.75 404.7 L447.00 404.6 L447.25 405.4 L447.50 405.4 L447.75 400.6 L448.00 403.9 L448.25 404.0 L448.50 403.6 L448.75 404.4 L449.00 404.7 L449.25 402.7 L449.50 405.0 L449.75 405.1 L450.00 404.9 L450.25 405.6 L450.50 405.8 L450.75 406.5 L451.00 407.6 L451.25 406.6 L451.50 407.3 L451.75 408.1 L452.00 408.1 L452.25 406.4 L452.50 412.4 L452.75 407.3 L453.00 407.0 L453.25 407.0 L453.50 407.7 L453.75 407.4 L454.00 409.1 L454.25 410.0 L454.50 409.2 L454.75 409.5 L455.00 408.3 L455.25 406.8 L455.50 407.1 L455.75 409.4 L456.00 408.2 L456.25 411.2 L456.50 410.8 L456.75 410.7 L457.00 409.5 L457.25 408.6 L457.50 409.3 L457.75 410.3 L458.00 409.1 L458.25 408.5 L458.50 408.6 L458.75 407.5 L459.00 410.7 L459.25 410.3 L459.50 408.2 L459.75 411.6 L460.00 411.5 L460.25 408.9 L460.50 409.0 L460.75 409.3 L461.00 409.7 L461.25 408.8 L461.50 407.6 L461.75 406.6 L462.00 405.7 L462.25 407.9 L462.50 406.9 L462.75 406.8 L463.00 407.7 L463.25 404.6 L463.50 407.3 L463.75 405.2 L464.00 405.3 L464.25 406.3 L464.50 405.4 L464.75 406.2 L465.00 408.3 L465.25 406.8 L465.50 408.0 L465.75 408.2 L466.00 406.4 L466.25 407.2 L466.50 406.9 L466.75 408.8 L467.00 407.5 L467.25 407.1 L467.50 407.2 L467.75 407.1 L468.00 407.8 L468.25 407.7 L468.50 407.7 L468.75 407.9 L469.00 406.8 L469.25 406.8 L469.50 407.5 L469.75 408.5 L470.00 407.1 L470.25 407.6 L470.50 409.5 L470.75 407.9 L471.00 405.9 L471.25 405.4 L471.50 405.9 L471.75 405.4 L472.00 406.7 L472.25 404.7 L472.50 404.4 L472.75 406.2 L473.00 406.9 L473.25 407.3 L473.50 405.0 L473.75 408.5 L474.00 406.2 L474.25 409.1 L474.50 406.9 L474.75 407.5 L475.00 405.8 L475.25 409.2 L475.50 408.6 L475.75 407.3 L476.00 408.1 L476.25 407.4 L476.50 407.1 L476.75 408.6 L477.00 408.4 L477.25 409.6 L477.50 408.6 L477.75 410.3 L478.00 410.9 L478.25 409.8 L478.50 410.2 L478.75 409.5 L479.00 408.5 L479.25 409.6 L479.50 410.4 L479.75 410.0 L480.00 411.8 L480.25 410.5 L480.50 409.2 L480.75 412.4 L481.00 410.0 L481.25 412.5 L481.50 412.5 L481.75 411.2 L482.00 412.6 L482.25 412.2 L482.50 411.8 L482.75 413.6 L483.00 412.4 L483.25 413.1 L483.50 414.6 L483.75 412.7 L484.00 413.5 L484.25 413.2 L484.50 415.9 L484.75 414.1 L485.00 415.6 L485.25 415.2 L485.50 415.2 L485.75 415.5 L486.00 416.6 L486.25 415.9 L486.50 417.4 L486.75 416.9 L487.00 415.0 L487.25 416.8 L487.50 415.5 L487.75 415.4 L488.00 415.1 L488.25 415.2 L488.50 414.8 L488.75 414.3 L489.00 414.5 L489.25 415.4 L489.50 413.3 L489.75 413.4 L490.00 414.4 L490.25 410.1 L490.50 412.3 L490.75 413.0 L491.00 412.7 L491.25 411.6 L491.50 412.1 L491.75 412.2 L492.00 413.1 L492.25 410.1 L492.50 413.0 L492.75 412.4 L493.00 411.2 L493.25 410.4 L493.50 411.8 L493.75 412.2 L494.00 411.1 L494.25 410.0 L494.50 410.8 L494.75 410.2 L495.00 409.9 L495.25 408.2 L495.50 411.6 L495.75 409.6 L496.00 410.2 L496.25 410.1 L496.50 409.4 L496.75 409.2 L497.00 407.8 L497.25 404.4 L497.50 409.2 L497.75 409.4 L498.00 408.1 L498.25 410.5 L498.50 408.5 L498.75 408.8 L499.00 410.6 L499.25 407.0 L499.50 408.4 L499.75 409.1 L500.00 409.0 L500.25 408.4 L500.50 407.3 L500.75 408.9 L501.00 410.0 L501.25 408.9 L501.50 406.9 L501.75 405.4 L502.00 409.4 L502.25 411.2 L502.50 410.5 L502.75 410.6 L503.00 411.1 L503.25 410.8 L503.50 410.2 L503.75 411.4 L504.00 412.0 L504.25 409.6 L504.50 410.4 L504.75 409.4 L505.00 410.9 L505.25 409.1 L505.50 408.6 L505.75 408.3 L506.00 407.8 L506.25 403.6 L506.50 407.7 L506.75 407.2 L507.00 403.8 L507.25 406.6 L507.50 406.6 L507.75 406.0 L508.00 405.8 L508.25 405.9 L508.50 407.0 L508.75 404.8 L509.00 405.7 L509.25 405.6 L509.50 402.2 L509.75 404.1 L510.00 404.2 L510.25 403.8 L510.50 402.4 L510.75 402.8 L511.00 402.6 L511.25 401.5 L511.50 401.9 L511.75 401.2 L512.00 400.3 L512.25 401.7 L512.50 401.4 L512.75 399.9 L513.00 401.9 L513.25 401.3 L513.50 401.3 L513.75 403.5 L514.00 401.9 L514.25 403.3 L514.50 402.2 L514.75 403.0 L515.00 405.1 L515.25 404.6 L515.50 402.7 L515.75 406.8 L516.00 405.9 L516.25 407.5 L516.50 406.6 L516.75 406.7 L517.00 408.3 L517.25 408.8 L517.50 407.1 L517.75 407.5 L518.00 410.7 L518.25 407.0 L518.50 410.3 L518.75 409.2 L519.00 411.2 L519.25 407.5 L519.50 407.6 L519.75 411.6 L520.00 411.0 L520.25 411.1 L520.50 411.0 L520.75 414.2 L521.00 411.3 L521.25 411.9 L521.50 411.8 L521.75 412.2 L522.00 413.8 L522.25 411.1 L522.50 411.4 L522.75 411.4 L523.00 413.6 L523.25 411.3 L523.50 413.2 L523.75 411.4 L524.00 412.2 L524.25 411.0 L524.50 411.4 L524.75 410.7 L525.00 409.5 L525.25 409.4 L525.50 410.3 L525.75 409.9 L526.00 409.4 L526.25 408.1 L526.50 407.7 L526.75 408.2 L527.00 410.4 L527.25 407.7 L527.50 409.3 L527.75 410.5 L528.00 411.6 L528.25 409.8 L528.50 409.9 L528.75 410.9 L529.00 411.0 L529.25 411.1 L529.50 409.7 L529.75 409.9 L530.00 411.6 L530.25 410.3 L530.50 412.7 L530.75 412.2 L531.00 412.0 L531.25 412.6 L531.50 412.1 L531.75 413.2 L532.00 412.0 L532.25 413.7 L532.50 412.9 L532.75 412.2 L533.00 414.6 L533.25 412.0 L533.50 413.8 L533.75 413.6 L534.00 414.0 L534.25 412.2 L534.50 413.6 L534.75 413.3 L535.00 412.3 L535.25 412.9 L535.50 412.9 L535.75 412.3 L536.00 409.2 L536.25 411.0 L536.50 410.9 L536.75 410.2 L537.00 409.7 L537.25 410.0 L537.50 408.2 L537.75 408.5 L538.00 408.8 L538.25 407.5 L538.50 408.8 L538.75 408.0 L539.00 408.3 L539.25 408.0 L539.50 407.4 L539.75 406.7 L540.00 407.6 L540.25 407.3 L540.50 406.5 L540.75 405.6 L541.00 405.4 L541.25 405.2 L541.50 406.2 L541.75 405.9 L542.00 405.7 L542.25 405.5 L542.50 409.3 L542.75 405.3 L543.00 405.9 L543.25 405.9 L543.50 404.5 L543.75 406.8 L544.00 406.8 L544.25 405.8 L544.50 406.7 L544.75 406.7 L545.00 406.4 L545.25 406.9 L545.50 406.9 L545.75 405.7 L546.00 407.5 L546.25 408.2 L546.50 406.8 L546.75 407.0 L547.00 406.7 L547.25 406.5 L547.50 406.5 L547.75 406.3 L548.00 405.1 L548.25 406.4 L548.50 405.9 L548.75 406.2 L549.00 406.3 L549.25 406.3 L549.50 405.9 L549.75 405.4 L550.00 404.1 L550.25 404.7 L550.50 405.3 L550.75 401.5 L551.00 402.4 L551.25 402.2 L551.50 402.2 L551.75 401.0 L552.00 401.0 L552.25 399.1 L552.50 400.1 L552.75 398.4 L553.00 399.6 L553.25 400.7 L553.50 401.2 L553.75 397.9 L554.00 400.1 L554.25 398.4 L554.50 399.0 L554.75 399.6 L555.00 398.7 L555.25 398.4 L555.50 397.3 L555.75 401.2 L556.00 398.7 L556.25 396.2 L556.50 397.3 L556.75 400.4 L557.00 399.5 L557.25 398.3 L557.50 398.6 L557.75 397.8 L558.00 397.9 L558.25 398.9 L558.50 399.3 L558.75 398.8 L559.00 398.2 L559.25 398.5 L559.50 398.9 L559.75 400.5 L560.00 399.0 L560.25 401.3 L560.50 400.0 L560.75 399.1 L561.00 399.8 L561.25 401.3 L561.50 399.0 L561.75 399.5 L562.00 400.2 L562.25 400.0 L562.50 396.7 L562.75 398.9 L563.00 400.0 L563.25 400.0 L563.50 400.6 L563.75 400.3 L564.00 401.1 L564.25 395.3 L564.50 400.2 L564.75 399.5 L565.00 399.1 L565.25 400.3 L565.50 399.7 L565.75 399.4 L566.00 398.2 L566.25 398.1 L566.50 398.9 L566.75 398.1 L567.00 400.0 L567.25 398.4 L567.50 398.5 L567.75 398.0 L568.00 399.3 L568.25 397.2 L568.50 399.2 L568.75 400.0 L569.00 398.7 L569.25 399.0 L569.50 399.0 L569.75 399.0 L570.00 398.1 L570.25 398.0 L570.50 394.8 L570.75 398.1 L571.00 397.5 L571.25 397.3 L571.50 398.5 L571.75 399.0 L572.00 398.6 L572.25 398.9 L572.50 397.9 L572.75 396.2 L573.00 397.9 L573.25 399.8 L573.50 398.8 L573.75 398.7 L574.00 400.3 L574.25 397.9 L574.50 399.5 L574.75 399.5 L575.00 398.6 L575.25 397.8 L575.50 399.7 L575.75 399.3 L576.00 398.6 L576.25 398.4 L576.50 399.0 L576.75 398.2 L577.00 402.0 L577.25 399.6 L577.50 399.6 L577.75 399.7 L578.00 401.5 L578.25 401.8 L578.50 401.9 L578.75 402.1 L579.00 402.7 L579.25 399.4 L579.50 403.3 L579.75 402.8 L580.00 402.9 L580.25 403.9 L580.50 403.3 L580.75 402.7 L581.00 403.1 L581.25 403.4 L581.50 403.3 L581.75 402.6 L582.00 404.1 L582.25 402.1 L582.50 403.8 L582.75 402.0 L583.00 404.2 L583.25 406.0 L583.50 402.7 L583.75 401.2 L584.00 403.3 L584.25 401.8 L584.50 403.5 L584.75 403.5 L585.00 400.1 L585.25 402.7 L585.50 404.3 L585.75 401.9 L586.00 402.7 L586.25 403.8 L586.50 403.4 L586.75 405.1 L587.00 404.2 L587.25 402.1 L587.50 403.9 L587.75 400.4 L588.00 403.2 L588.25 402.2 L588.50 403.1 L588.75 402.4 L589.00 403.1 L589.25 401.9 L589.50 403.0 L589.75 402.2 L590.00 405.4 L590.25 401.2 L590.50 400.9 L590.75 402.6 L591.00 402.0 L591.25 402.4 L591.50 402.2 L591.75 401.8 L592.00 401.6 L592.25 401.8 L592.50 401.4 L592.75 402.6 L593.00 402.5 L593.25 400.8 L593.50 402.2 L593.75 400.1 L594.00 398.8 L594.25 399.4 L594.50 401.2 L594.75 401.5 L595.00 401.9 L595.25 402.8 L595.50 402.6 L595.75 400.9 L596.00 401.8 L596.25 402.0 L596.50 402.5 L596.75 403.0 L597.00 403.7 L597.25 403.5 L597.50 401.2 L597.75 404.3 L598.00 402.6 L598.25 402.7 L598.50 404.2 L598.75 403.1 L599.00 403.3 L599.25 403.3 L599.50 402.3 L599.75 404.8 L600.00 405.0 L600.25 404.0 L600.50 403.7 L600.75 404.0 L601.00 405.7 L601.25 403.4 L601.50 404.7 L601.75 405.6 L602.00 402.4 L602.25 405.7 L602.50 404.8 L602.75 406.1 L603.00 405.3 L603.25 405.4 L603.50 405.5 L603.75 405.0 L604.00 406.3 L604.25 407.0 L604.50 404.8 L604.75 405.5 L605.00 406.2 L605.25 405.9 L605.50 408.8 L605.75 407.6 L606.00 408.5 L606.25 407.9 L606.50 406.2 L606.75 407.9 L607.00 407.8 L607.25 407.2 L607.50 407.0 L607.75 408.9 L608.00 408.5 L608.25 409.0 L608.50 408.2 L608.75 409.0 L609.00 410.3 L609.25 409.3 L609.50 410.1 L609.75 411.1 L610.00 411.5 L610.25 411.1 L610.50 410.2 L610.75 411.8 L611.00 410.8 L611.25 411.8 L611.50 413.5 L611.75 411.0 L612.00 408.7 L612.25 407.8 L612.50 408.2 L612.75 408.8 L613.00 407.4 L613.25 405.9 L613.50 405.6 L613.75 403.3 L614.00 404.7 L614.25 402.4 L614.50 403.4 L614.75 406.7 L615.00 401.7 L615.25 405.7 L615.50 401.9 L615.75 403.0 L616.00 403.2 L616.25 402.5 L616.50 402.0 L616.75 405.0 L617.00 402.8 L617.25 405.3 L617.50 404.6 L617.75 404.2 L618.00 404.7 L618.25 405.0 L618.50 404.5 L618.75 403.4 L619.00 403.1 L619.25 404.2 L619.50 404.1 L619.75 404.8 L620.00 404.1 L620.25 404.5 L620.50 399.9 L620.75 405.6 L621.00 403.4 L621.25 403.3 L621.50 402.4 L621.75 402.4 L622.00 404.1 L622.25 402.8 L622.50 403.1 L622.75 405.1 L623.00 402.8 L623.25 402.8 L623.50 402.2 L623.75 401.7 L624.00 402.8 L624.25 401.9 L624.50 399.8 L624.75 402.0 L625.00 399.5 L625.25 402.9 L625.50 401.4 L625.75 401.9 L626.00 402.4 L626.25 402.6 L626.50 402.9 L626.75 403.3 L627.00 403.0 L627.25 402.9 L627.50 406.3 L627.75 403.9 L628.00 404.4 L628.25 405.8 L628.50 405.7 L628.75 404.1 L629.00 405.6 L629.25 405.5 L629.50 406.1 L629.75 406.1 L630.00 406.0 L630.25 408.2 L630.50 406.1 L630.75 405.5 L631.00 406.9 L631.25 405.2 L631.50 407.1 L631.75 406.5 L632.00 406.9 L632.25 406.7 L632.50 405.3 L632.75 406.7 L633.00 403.7 L633.25 405.1 L633.50 404.8 L633.75 405.8 L634.00 405.8 L634.25 404.7 L634.50 404.7 L634.75 403.5 L635.00 405.4 L635.25 404.0 L635.50 405.1 L635.75 405.4 L636.00 403.0 L636.25 404.1 L636.50 404.1 L636.75 407.0 L637.00 406.1 L637.25 405.6 L637.50 403.4 L637.75 403.9 L638.00 405.7 L638.25 404.1 L638.50 405.3 L638.75 404.0 L639.00 406.4 L639.25 407.2 L639.50 405.7 L639.75 406.4 L640.00 406.5 L640.25 405.8 L640.50 404.9 L640.75 406.7 L641.00 405.0 L641.25 406.5 L641.50 405.0 L641.75 406.9 L642.00 406.3 L642.25 406.8 L642.50 405.4 L642.75 407.9 L643.00 404.2 L643.25 406.7 L643.50 403.9 L643.75 406.5 L644.00 407.4 L644.25 407.4 L644.50 406.3 L644.75 407.2 L645.00 408.1 L645.25 409.0 L645.50 408.8 L645.75 407.7 L646.00 409.5 L646.25 407.8 L646.50 409.3 L646.75 410.9 L647.00 409.1 L647.25 409.4 L647.50 408.3 L647.75 407.2 L648.00 409.1 L648.25 408.3 L648.50 407.6 L648.75 407.8 L649.00 407.5 L649.25 408.0 L649.50 407.0 L649.75 406.3 L650.00 405.5 L650.25 404.4 L650.50 404.3 L650.75 404.2 L651.00 404.4 L651.25 403.0 L651.50 401.6 L651.75 401.6 L652.00 401.7 L652.25 403.2 L652.50 401.0 L652.75 401.6 L653.00 403.9 L653.25 400.3 L653.50 400.9 L653.75 400.8 L654.00 400.0 L654.25 402.8 L654.50 401.6 L654.75 401.8 L655.00 402.0 L655.25 402.4 L655.50 398.3 L655.75 402.2 L656.00 401.7 L656.25 401.6 L656.50 401.9 L656.75 400.0 L657.00 401.5 L657.25 401.9 L657.50 404.4 L657.75 400.5 L658.00 401.8 L658.25 403.4 L658.50 403.1 L658.75 402.4 L659.00 400.4 L659.25 402.1 L659.50 402.0 L659.75 401.4 L660.00 400.6 L660.25 400.9 L660.50 401.3 L660.75 399.7 L661.00 401.6 L661.25 401.4 L661.50 401.6 L661.75 402.1 L662.00 401.1 L662.25 402.1 L662.50 400.7 L662.75 399.8 L663.00 400.3 L663.25 400.7 L663.50 403.4 L663.75 400.1 L664.00 400.9 L664.25 400.9 L664.50 400.9 L664.75 400.2 L665.00 400.8 L665.25 401.5 L665.50 399.6 L665.75 402.1 L666.00 400.7 L666.25 400.7 L666.50 399.5 L666.75 396.6 L667.00 399.5 L667.25 399.9 L667.50 398.7 L667.75 400.5 L668.00 398.9 L668.25 398.9 L668.50 398.6 L668.75 399.5 L669.00 399.3 L669.25 399.8 L669.50 399.5 L669.75 399.9 L670.00 399.1 L670.25 400.6 L670.50 397.6 L670.75 398.8 L671.00 400.0 L671.25 398.0 L671.50 400.1 L671.75 401.2 L672.00 397.3 L672.25 398.9 L672.50 400.0 L672.75 400.1 L673.00 400.7 L673.25 400.2 L673.50 399.2 L673.75 400.4 L674.00 400.7 L674.25 399.0 L674.50 399.8 L674.75 399.4 L675.00 398.9 L675.25 398.0 L675.50 398.9 L675.75 399.2 L676.00 400.2 L676.25 396.6 L676.50 396.3 L676.75 399.5 L677.00 397.3 L677.25 398.8 L677.50 397.7 L677.75 399.6 L678.00 397.7 L678.25 396.4 L678.50 395.0 L678.75 399.4 L679.00 398.2 L679.25 396.7 L679.50 397.8 L679.75 397.0 L680.00 398.6 L680.25 396.0 L680.50 397.5 L680.75 396.0 L681.00 396.2 L681.25 396.7 L681.50 395.3 L681.75 399.0 L682.00 396.3 L682.25 394.4 L682.50 395.9 L682.75 395.8 L683.00 394.5 L683.25 394.8 L683.50 394.8 L683.75 393.4 L684.00 395.3 L684.25 393.0 L684.50 393.0 L684.75 394.6 L685.00 394.8 L685.25 395.6 L685.50 395.3 L685.75 394.6 L686.00 394.0 L686.25 393.7 L686.50 393.7 L686.75 393.6 L687.00 393.0 L687.25 397.2 L687.50 393.8 L687.75 393.9 L688.00 394.7 L688.25 394.0 L688.50 394.2 L688.75 392.6 L689.00 393.3 L689.25 395.7 L689.50 397.1 L689.75 393.6 L690.00 393.7 L690.25 393.0 L690.50 393.1 L690.75 394.1 L691.00 394.7 L691.25 396.1 L691.50 393.5 L691.75 393.7 L692.00 395.3 L692.25 394.3 L692.50 393.8 L692.75 394.5 L693.00 394.3 L693.25 395.6 L693.50 394.4 L693.75 395.2 L694.00 394.1 L694.25 395.3 L694.50 393.4 L694.75 395.5 L695.00 395.7 L695.25 395.3 L695.50 394.7 L695.75 394.3 L696.00 395.9 L696.25 396.5 L696.50 395.1 L696.75 395.0 L697.00 394.7 L697.25 395.4 L697.50 394.3 L697.75 395.7 L698.00 395.1 L698.25 394.6 L698.50 395.1 L698.75 395.5 L699.00 394.4 L699.25 395.3 L699.50 397.6 L699.75 395.7 L700.00 395.9 L700.25 396.0 L700.50 396.2 L700.75 395.6 L701.00 394.3 L701.25 395.5 L701.50 396.1 L701.75 395.6 L702.00 399.8 L702.25 396.3 L702.50 398.3 L702.75 397.1 L703.00 396.6 L703.25 396.4 L703.50 397.8 L703.75 399.4 L704.00 397.2 L704.25 397.3 L704.50 396.6 L704.75 399.5 L705.00 395.8 L705.25 396.0 L705.50 395.8 L705.75 397.9 L706.00 396.7 L706.25 397.0 L706.50 394.4 L706.75 396.5 L707.00 395.0 L707.25 398.8 L707.50 395.9 L707.75 396.0 L708.00 395.7 L708.25 395.9 L708.50 395.1 L708.75 394.2 L709.00 394.1 L709.25 395.0 L709.50 393.5 L709.75 394.0 L710.00 393.9 L710.25 392.7 L710.50 392.7 L710.75 394.6 L711.00 391.2 L711.25 392.1 L711.50 392.5 L711.75 392.2 L712.00 390.8 L712.25 392.7 L712.50 392.5 L712.75 391.7 L713.00 391.4 L713.25 393.0 L713.50 392.9 L713.75 392.4 L714.00 390.9 L714.25 391.0 L714.50 393.2 L714.75 392.9 L715.00 392.6 L715.25 390.9 L715.50 393.5 L715.75 390.0 L716.00 392.8 L716.25 392.3 L716.50 393.6 L716.75 390.5 L717.00 393.0 L717.25 394.9 L717.50 391.7 L717.75 392.8 L718.00 393.8 L718.25 395.6 L718.50 395.8 L718.75 393.8 L719.00 394.4 L719.25 393.0 L719.50 394.7 L719.75 394.5 L720.00 394.1 L720.25 393.6 L720.50 392.4 L720.75 394.2 L721.00 392.2 L721.25 393.9 L721.50 392.7 L721.75 392.1 L722.00 392.8 L722.25 394.7 L722.50 393.1 L722.75 393.6 L723.00 396.0 L723.25 392.2 L723.50 393.4 L723.75 395.6 L724.00 393.6 L724.25 393.8 L724.50 394.9 L724.75 397.0 L725.00 395.1 L725.25 398.3 L725.50 395.9 L725.75 394.4 L726.00 397.3 L726.25 396.7 L726.50 398.8 L726.75 399.0 L727.00 399.7 L727.25 398.6 L727.50 397.6 L727.75 399.2 L728.00 397.9 L728.25 398.6 L728.50 398.2 L728.75 399.2 L729.00 397.9 L729.25 397.7 L729.50 401.3 L729.75 399.7 L730.00 399.8 L730.25 400.1 L730.50 399.0 L730.75 399.2 L731.00 398.0 L731.25 399.4 L731.50 400.5 L731.75 399.5 L732.00 401.9 L732.25 400.9 L732.50 400.2 L732.75 400.3 L733.00 400.5 L733.25 400.9 L733.50 401.4 L733.75 401.5 L734.00 402.6 L734.25 403.0 L734.50 399.2 L734.75 403.8 L735.00 402.2 L735.25 402.8 L735.50 402.2 L735.75 402.6 L736.00 402.8 L736.25 405.5 L736.50 403.3 L736.75 404.4 L737.00 403.9 L737.25 402.4 L737.50 402.2 L737.75 403.0 L738.00 401.3 L738.25 403.8 L738.50 404.8 L738.75 400.8 L739.00 402.8 L739.25 401.0 L739.50 401.0 L739.75 400.6 L740.00 402.1 L740.25 401.1 L740.50 401.8 L740.75 402.2 L741.00 400.9 L741.25 400.6 L741.50 400.6 L741.75 400.3 L742.00 399.6 L742.25 400.7 L742.50 399.8 L742.75 398.4 L743.00 398.9 L743.25 399.2 L743.50 399.5 L743.75 396.1 L744.00 398.7 L744.25 399.9 L744.50 399.1 L744.75 396.4 L745.00 397.0 L745.25 397.7 L745.50 398.3 L745.75 395.7 L746.00 397.6 L746.25 397.7 L746.50 396.9 L746.75 396.4 L747.00 396.2 L747.25 394.7 L747.50 397.1 L747.75 395.5 L748.00 393.0 L748.25 394.3 L748.50 394.3 L748.75 392.8 L749.00 391.8 L749.25 392.6 L749.50 391.4 L749.75 391.8 L750.00 392.9 L750.25 391.6 L750.50 390.5 L750.75 390.5 L751.00 391.9 L751.25 392.1 L751.50 391.1 L751.75 391.9 L752.00 391.8 L752.25 390.3 L752.50 391.9 L752.75 395.1 L753.00 392.4 L753.25 391.9 L753.50 391.7 L753.75 392.5 L754.00 390.9 L754.25 392.2 L754.50 391.7 L754.75 391.5 L755.00 391.4 L755.25 390.8 L755.50 391.8 L755.75 391.6 L756.00 391.9 L756.25 392.2 L756.50 393.2 L756.75 395.8 L757.00 391.9 L757.25 392.3 L757.50 393.2 L757.75 392.7 L758.00 392.2 L758.25 389.7 L758.50 393.1 L758.75 389.2 L759.00 393.6 L759.25 391.2 L759.50 392.3 L759.75 392.9 L760.00 393.9 L760.25 392.4 L760.50 391.6 L760.75 392.8 L761.00 392.2 L761.25 392.0 L761.50 394.3 L761.75 393.1 L762.00 393.4 L762.25 392.3 L762.50 395.3 L762.75 392.0 L763.00 391.8 L763.25 392.0 L763.50 391.6 L763.75 391.4 L764.00 389.9 L764.25 390.7 L764.50 392.3 L764.75 391.3 L765.00 392.1 L765.25 390.4 L765.50 389.1 L765.75 393.0 L766.00 389.6 L766.25 388.4 L766.50 390.0 L766.75 390.0 L767.00 389.2 L767.25 387.6 L767.50 388.4 L767.75 388.2 L768.00 389.1 L768.25 388.7 L768.50 388.5 L768.75 388.5 L769.00 387.3 L769.25 388.1 L769.50 387.5 L769.75 385.0 L770.00 388.4 L770.25 388.3 L770.50 390.1 L770.75 389.1 L771.00 389.0 L771.25 388.4 L771.50 390.2 L771.75 389.8 L772.00 392.4 L772.25 391.4 L772.50 391.4 L772.75 392.1 L773.00 394.0 L773.25 391.4 L773.50 391.8 L773.75 391.4 L774.00 391.0 L774.25 393.3 L774.50 392.5 L774.75 392.9 L775.00 395.6 L775.25 394.3 L775.50 395.2 L775.75 394.7 L776.00 394.3 L776.25 393.7 L776.50 396.1 L776.75 396.1 L777.00 395.8 L777.25 395.9 L777.50 396.8 L777.75 397.0 L778.00 396.2 L778.25 396.1 L778.50 395.4 L778.75 395.6 L779.00 394.9 L779.25 397.2 L779.50 395.1 L779.75 396.0 L780.00 395.0" stroke="#ff6929" stroke-width="1.25"/>
<line x1="49" x2="780" y1="249.1" y2="249.1" stroke="#64d413" stroke-width="1.6"/>
<line x1="49" x2="780" y1="379.4" y2="379.4" stroke="#b746ff" stroke-width="1.6"/>
<line x1="49" x2="780" y1="404.2" y2="404.2" stroke="#0fffff" stroke-width="1.6"/>
</g>
<text transform="translate(17.4 249.5) rotate(-90)" text-anchor="middle" font-family="Liberation Sans" font-size="11" fill="#c4c4c4">Amplitude</text>
<path d="M49.5 60v6M49.5 440v-6M98.5 60v3M98.5 440v-3M146.5 60v6M146.5 440v-6M195.5 60v3M195.5 440v-3M244.5 60v6M244.5 440v-6M293.5 60v3M293.5 440v-3M341.5 60v6M341.5 440v-6M390.5 60v3M390.5 440v-3M439.5 60v6M439.5 440v-6M488.5 60v3M488.5 440v-3M536.5 60v6M536.5 440v-6M585.5 60v3M585.5 440v-3M634.5 60v6M634.5 440v-6M683.5 60v3M683.5 440v-3M731.5 60v6M731.5 440v-6M780.5 60v3M780.5 440v-3M49 439.5h3M781 439.5h-3M49 420.5h6M781 420.5h-6M49 401.5h3M781 401.5h-3M49 382.5h6M781 382.5h-6M49 363.5h3M781 363.5h-3M49 344.5h6M781 344.5h-6M49 325.5h3M781 325.5h-3M49 306.5h6M781 306.5h-6M49 287.5h3M781 287.5h-3M49 268.5h6M781 268.5h-6M49 250.5h3M781 250.5h-3M49 231.5h6M781 231.5h-6M49 212.5h3M781 212.5h-3M49 193.5h6M781 193.5h-6M49 174.5h3M781 174.5h-3M49 155.5h6M781 155.5h-6M49 136.5h3M781 136.5h-3M49 117.5h6M781 117.5h-6M49 98.5h3M781 98.5h-3M49 79.5h6M781 79.5h-6M49 60.5h3M781 60.5h-3" stroke="#bdbdbd" fill="none"/>
<rect x="49.5" y="60.5" width="731" height="379" stroke="#bdbdbd" fill="none"/>
</svg>
<div class="tl xl" style="left:9.4px">0</div>
<div class="tl xl" style="left:106.9px">2000</div>
<div class="tl xl" style="left:204.3px">4000</div>
<div class="tl xl" style="left:301.8px">6000</div>
<div class="tl xl" style="left:399.3px">8000</div>
<div class="tl xl" style="left:496.7px">10000</div>
<div class="tl xl" style="left:594.2px">12000</div>
<div class="tl xl" style="left:691.7px">14000</div>
<div class="tl yl" style="top:414.9px">-0.2</div>
<div class="tl yl" style="top:376.9px">-0.1</div>
<div class="tl yl" style="top:339.1px">0</div>
<div class="tl yl" style="top:301.2px">0.1</div>
<div class="tl yl" style="top:263.3px">0.2</div>
<div class="tl yl" style="top:225.4px">0.3</div>
<div class="tl yl" style="top:187.5px">0.4</div>
<div class="tl yl" style="top:149.6px">0.5</div>
<div class="tl yl" style="top:111.7px">0.6</div>
<div class="tl yl" style="top:73.8px">0.7</div>
<div class="tl" style="left:395px;top:457px">Time (s)</div>
<div id="status"></div>
<div class="st" style="left:3px">Processing</div>
<div class="st" style="right:3.7px">T = 14999.0</div>
</body></html>
